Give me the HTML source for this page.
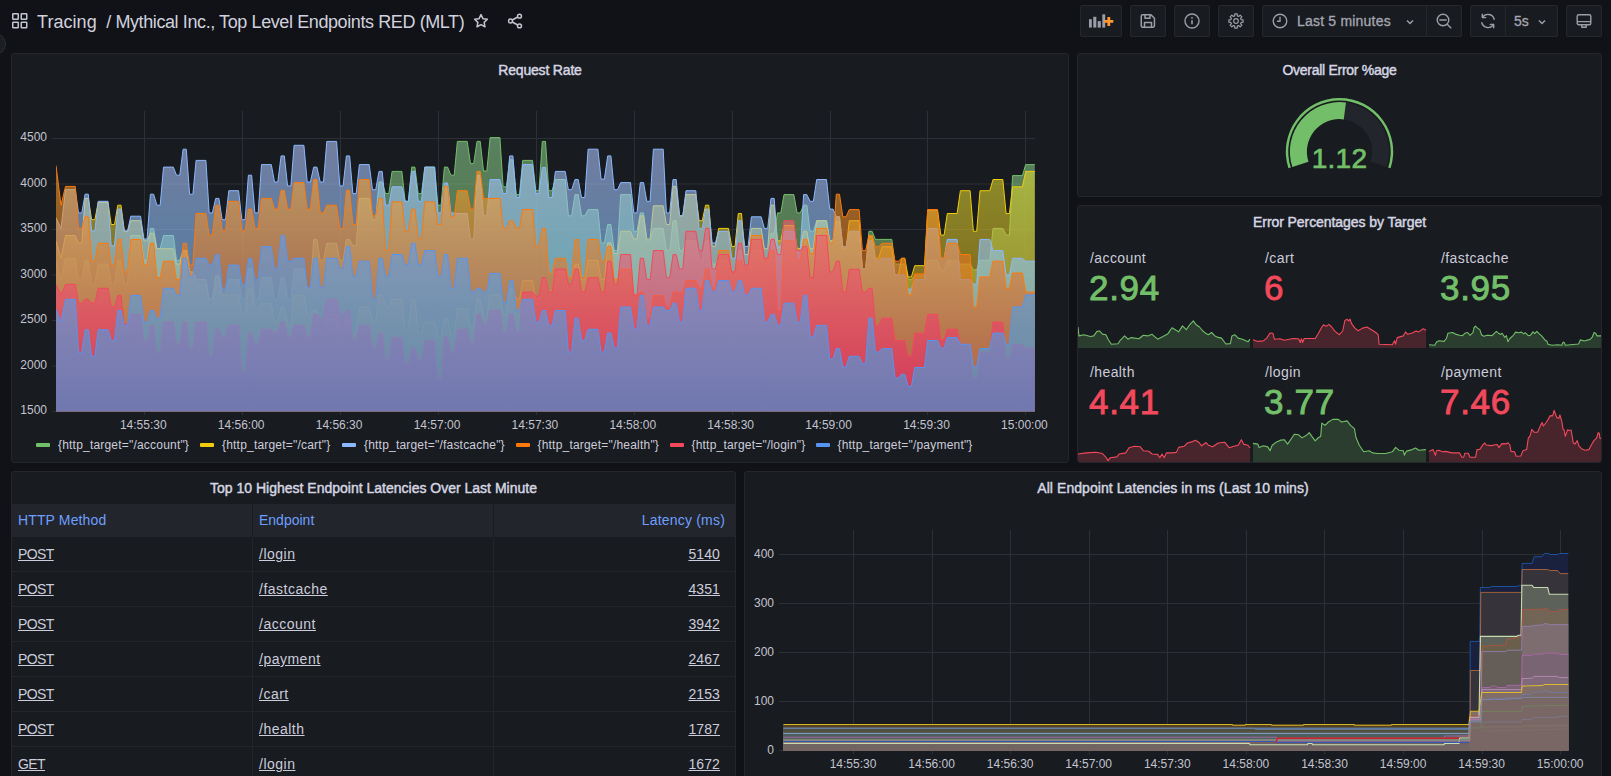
<!DOCTYPE html>
<html lang="en">
<head>
<meta charset="utf-8">
<title>Mythical Inc., Top Level Endpoints RED (MLT)</title>
<style>
*{box-sizing:border-box;margin:0;padding:0}
html,body{width:1611px;height:776px;overflow:hidden;background:#111217;color:#ccccdc;font-family:"Liberation Sans",sans-serif;font-size:14px}
.abs{position:absolute}
.panel{position:absolute;background:#181b1f;border:1px solid #24262b;border-radius:3px;overflow:hidden}
.ptitle{position:absolute;left:0;right:0;top:7px;height:18px;line-height:18px;text-align:center;font-size:14px;color:#d5d6e2;-webkit-text-stroke:0.45px #d5d6e2;letter-spacing:-0.15px}
.tb{position:absolute;top:5px;height:32px;background:#181b1f;border:1px solid #25272d;border-radius:2px}
.tb svg{position:absolute}
.crumb{position:absolute;left:37px;top:10px;height:24px;line-height:24px;font-size:18px;color:#d0d1de;white-space:nowrap;letter-spacing:-0.15px}
svg text{font-family:"Liberation Sans",sans-serif}
.th{position:absolute;top:0;height:33px;line-height:33px;color:#6e9fff;font-size:14px;white-space:nowrap}
.td{position:absolute;height:35px;line-height:34px;font-size:14px;color:#ccccdc;text-decoration:underline;white-space:nowrap}
.row{position:absolute;left:0;width:724px;height:35px;border-bottom:1px solid #23252a}
.stat-l{position:absolute;letter-spacing:0.4px;font-size:14px;color:#ccccdc;white-space:nowrap;line-height:16px}
.stat-v{position:absolute;font-size:35px;white-space:nowrap;line-height:36px;-webkit-text-stroke:0.9px currentColor;letter-spacing:0.7px}
.g{color:#73bf69}.r{color:#f2495c}
.leg{position:absolute;top:437px;height:16px;line-height:16px;font-size:12px;color:#ccccdc;white-space:nowrap;letter-spacing:0.2px}
.sw{position:absolute;top:443px;width:14px;height:4px;border-radius:1px}
</style>
</head>
<body>


<div class="abs" style="left:-16px;top:33px;width:22px;height:22px;border-radius:11px;background:#1b1e23;border:1px solid #2c2f36"></div>
<svg class="abs" style="left:11px;top:12px" width="18" height="18" viewBox="0 0 18 18" fill="none" stroke="#c4c5d2" stroke-width="1.5"><rect x="1.75" y="1.75" width="5.5" height="5.5" rx="0.5"/><rect x="10.25" y="1.75" width="5.5" height="5.5" rx="0.5"/><rect x="1.75" y="10.25" width="5.5" height="5.5" rx="0.5"/><rect x="10.25" y="10.25" width="5.5" height="5.5" rx="0.5"/></svg>
<div class="crumb"><span id="c1" style="letter-spacing:0.05px">Tracing</span><span id="c2" style="margin-left:9.5px;letter-spacing:-0.4px">/ Mythical Inc., Top Level Endpoints RED (MLT)</span></div>
<svg class="abs" style="left:472px;top:12px" width="18" height="18" viewBox="0 0 24 24" fill="none" stroke="#c4c5d2" stroke-width="2" stroke-linejoin="round"><path d="M12 3.5l2.6 5.4 5.9.8-4.3 4.1 1.1 5.9-5.3-2.9-5.3 2.9 1.1-5.9-4.3-4.100 5.900-.8z"/></svg>
<svg class="abs" style="left:506px;top:12px" width="18" height="18" viewBox="0 0 24 24" fill="none" stroke="#c4c5d2" stroke-width="2"><circle cx="18" cy="5.500" r="2.600"/><circle cx="6" cy="12" r="2.600"/><circle cx="18" cy="18.500" r="2.600"/><path d="M8.300 10.700l7.400-4M8.300 13.300l7.400 4"/></svg>

<div class="tb" style="left:1080px;width:42px;"><svg style="left:8px;top:8px" width="26" height="16" viewBox="0 0 26 16"><g fill="#9c9da8"><rect x="-0.100" y="5.200" width="2.900" height="8.400"/><rect x="4.250" y="2.800" width="3.100" height="10.800"/><rect x="8.700" y="7.100" width="3.100" height="6.500"/><rect x="13.300" y="0.300" width="2.900" height="13.300"/></g><path d="M19.800 2.900v9M15.300 7.400h9" stroke="#ff9830" stroke-width="2.800" fill="none"/></svg></div>
<div class="tb" style="left:1130px;width:36px;"><svg style="left:9px;top:7px" width="16" height="16" viewBox="0 0 16 16" fill="none" stroke="#9c9da8" stroke-width="1.500" stroke-linejoin="round"><path d="M2.500 1.750h8.200l3.500 3.500v7.500a1.500 1.500 0 0 1-1.500 1.500h-10.200a1.500 1.500 0 0 1-1.500-1.500v-9.500a1.500 1.500 0 0 1 1.500-1.500z" transform="translate(0.250,0)"/><path d="M5 1.750v3.500h5v-3.500M4.500 14v-4.500h7v4.500"/></svg></div>
<div class="tb" style="left:1174px;width:36px;"><svg style="left:9px;top:7px" width="16" height="16" viewBox="0 0 16 16" fill="none" stroke="#9c9da8" stroke-width="1.400"><circle cx="8" cy="8" r="7"/><path d="M8 7.300v4" stroke-width="1.600"/><circle cx="8" cy="4.900" r="0.900" fill="#9c9da8" stroke="none"/></svg></div>
<div class="tb" style="left:1218px;width:36px;"><svg style="left:9px;top:7px" width="16" height="16" viewBox="-8 -8 16 16" fill="none" stroke="#9c9da8" stroke-width="1.200" stroke-linejoin="round"><path d="M5.12 -1.36L7.10 -1.18L7.10 1.18L5.12 1.36L4.58 2.66L5.86 4.19L4.19 5.86L2.66 4.58L1.36 5.12L1.18 7.10L-1.18 7.10L-1.36 5.12L-2.66 4.58L-4.19 5.86L-5.86 4.19L-4.58 2.66L-5.12 1.36L-7.10 1.18L-7.10 -1.18L-5.12 -1.36L-4.58 -2.66L-5.86 -4.19L-4.19 -5.86L-2.66 -4.58L-1.36 -5.12L-1.18 -7.10L1.18 -7.10L1.36 -5.12L2.66 -4.58L4.19 -5.86L5.86 -4.19L4.58 -2.66Z"/><circle r="2.300"/></svg></div>
<div class="tb" style="left:1262px;width:165px;border-radius:2px 0 0 2px"><svg style="left:9px;top:7px" width="16" height="16" viewBox="0 0 16 16" fill="none" stroke="#9c9da8" stroke-width="1.400"><circle cx="8" cy="8" r="6.800"/><path d="M8 3.800v4.400h-3"/></svg><span id="tp" style="position:absolute;left:34px;top:0;line-height:30px;font-size:14px;color:#a5a6b2;white-space:nowrap;letter-spacing:0.2px;-webkit-text-stroke:0.3px #a5a6b2">Last 5 minutes</span><svg style="left:141px;top:10px" width="12" height="12" viewBox="0 0 12 12" fill="none" stroke="#9c9da8" stroke-width="1.500"><path d="M3 4.500l3 3 3-3"/></svg></div>
<div class="tb" style="left:1426px;width:36px;border-radius:0 2px 2px 0"><svg style="left:9px;top:7px" width="16" height="16" viewBox="0 0 16 16" fill="none" stroke="#9c9da8" stroke-width="1.400"><circle cx="7" cy="7" r="5.800"/><path d="M3.300 7h7.400M11.200 11.200l4 4"/></svg></div>
<div class="tb" style="left:1470px;width:36px;border-radius:2px 0 0 2px"><svg style="left:9px;top:7px" width="16" height="16" viewBox="0 0 16 16" fill="none" stroke="#9c9da8" stroke-width="1.400" stroke-linecap="round" stroke-linejoin="round"><path d="M14.200 6.200a6.400 6.400 0 0 0-11.600-1.800M1.800 9.800a6.400 6.400 0 0 0 11.600 1.800"/><path d="M2.300 1.200v3.400h3.400M13.700 14.800v-3.400h-3.400"/></svg></div>
<div class="tb" style="left:1505px;width:53px;border-radius:0 2px 2px 0"><span style="position:absolute;left:8px;top:0;line-height:30px;font-size:14px;color:#a5a6b2;-webkit-text-stroke:0.3px #a5a6b2">5s</span><svg style="left:30px;top:10px" width="12" height="12" viewBox="0 0 12 12" fill="none" stroke="#9c9da8" stroke-width="1.500"><path d="M3 4.500l3 3 3-3"/></svg></div>
<div class="tb" style="left:1566px;width:36px;"><svg style="left:9px;top:7px" width="16" height="16" viewBox="0 0 16 16" fill="none" stroke="#9c9da8" stroke-width="1.400" stroke-linejoin="round"><rect x="1.200" y="1.700" width="13.600" height="10" rx="1.500"/><path d="M1.200 8.600h13.600M5.300 14.300h5.400M5.800 11.700v2.600M10.200 11.700v2.600"/></svg></div>
<div class="panel" style="left:11px;top:53px;width:1058px;height:410px">
<div class="ptitle" style="letter-spacing:-0.18px"><span>Request Rate</span></div>
<svg class="abs" style="left:0;top:0" width="1056" height="408" viewBox="12 54 1056 408">
<defs>
<linearGradient id="g_acc" gradientUnits="userSpaceOnUse" x1="0" y1="111" x2="0" y2="411.500"><stop offset="0" stop-color="#8dce96" stop-opacity="0.58"/><stop offset="1" stop-color="#6dac49" stop-opacity="0.58"/></linearGradient>
<linearGradient id="g_cart" gradientUnits="userSpaceOnUse" x1="0" y1="111" x2="0" y2="411.500"><stop offset="0" stop-color="#e6f53c" stop-opacity="0.58"/><stop offset="1" stop-color="#c1750a" stop-opacity="0.58"/></linearGradient>
<linearGradient id="g_fc" gradientUnits="userSpaceOnUse" x1="0" y1="111" x2="0" y2="411.500"><stop offset="0" stop-color="#bdc6ff" stop-opacity="0.58"/><stop offset="1" stop-color="#57c3ff" stop-opacity="0.58"/></linearGradient>
<linearGradient id="g_h" gradientUnits="userSpaceOnUse" x1="0" y1="111" x2="0" y2="411.500"><stop offset="0" stop-color="#ffc53d" stop-opacity="0.58"/><stop offset="1" stop-color="#d62b00" stop-opacity="0.58"/></linearGradient>
<linearGradient id="g_log" gradientUnits="userSpaceOnUse" x1="0" y1="111" x2="0" y2="411.500"><stop offset="0" stop-color="#f58a79" stop-opacity="0.58"/><stop offset="1" stop-color="#ef1967" stop-opacity="0.58"/></linearGradient>
<linearGradient id="g_pay" gradientUnits="userSpaceOnUse" x1="0" y1="111" x2="0" y2="411.500"><stop offset="0" stop-color="#8696f6" stop-opacity="0.58"/><stop offset="1" stop-color="#28a8ee" stop-opacity="0.58"/></linearGradient>
<clipPath id="cp1"><rect x="56" y="100" width="978.800" height="311.500"/></clipPath></defs>
<path d="M52 138.5H1035" stroke="#2c2f35" stroke-width="1"/>
<text x="47" y="141.2" text-anchor="end" font-size="12" fill="#c3c4d0">4500</text>
<path d="M52 184.0H1035" stroke="#2c2f35" stroke-width="1"/>
<text x="47" y="186.7" text-anchor="end" font-size="12" fill="#c3c4d0">4000</text>
<path d="M52 229.5H1035" stroke="#2c2f35" stroke-width="1"/>
<text x="47" y="232.2" text-anchor="end" font-size="12" fill="#c3c4d0">3500</text>
<path d="M52 275.0H1035" stroke="#2c2f35" stroke-width="1"/>
<text x="47" y="277.7" text-anchor="end" font-size="12" fill="#c3c4d0">3000</text>
<path d="M52 320.5H1035" stroke="#2c2f35" stroke-width="1"/>
<text x="47" y="323.2" text-anchor="end" font-size="12" fill="#c3c4d0">2500</text>
<path d="M52 366.0H1035" stroke="#2c2f35" stroke-width="1"/>
<text x="47" y="368.7" text-anchor="end" font-size="12" fill="#c3c4d0">2000</text>
<path d="M52 411.5H1035" stroke="#2c2f35" stroke-width="1"/>
<text x="47" y="414.2" text-anchor="end" font-size="12" fill="#c3c4d0">1500</text>
<path d="M144.5 111V415" stroke="#2c2f35" stroke-width="1"/>
<text x="143.3" y="428.500" text-anchor="middle" font-size="12" fill="#c3c4d0">14:55:30</text>
<path d="M242.5 111V415" stroke="#2c2f35" stroke-width="1"/>
<text x="241.2" y="428.500" text-anchor="middle" font-size="12" fill="#c3c4d0">14:56:00</text>
<path d="M340.5 111V415" stroke="#2c2f35" stroke-width="1"/>
<text x="339.1" y="428.500" text-anchor="middle" font-size="12" fill="#c3c4d0">14:56:30</text>
<path d="M438.5 111V415" stroke="#2c2f35" stroke-width="1"/>
<text x="437.0" y="428.500" text-anchor="middle" font-size="12" fill="#c3c4d0">14:57:00</text>
<path d="M536.5 111V415" stroke="#2c2f35" stroke-width="1"/>
<text x="534.9" y="428.500" text-anchor="middle" font-size="12" fill="#c3c4d0">14:57:30</text>
<path d="M634.5 111V415" stroke="#2c2f35" stroke-width="1"/>
<text x="632.8" y="428.500" text-anchor="middle" font-size="12" fill="#c3c4d0">14:58:00</text>
<path d="M732.5 111V415" stroke="#2c2f35" stroke-width="1"/>
<text x="730.7" y="428.500" text-anchor="middle" font-size="12" fill="#c3c4d0">14:58:30</text>
<path d="M830.5 111V415" stroke="#2c2f35" stroke-width="1"/>
<text x="828.6" y="428.500" text-anchor="middle" font-size="12" fill="#c3c4d0">14:59:00</text>
<path d="M927.5 111V415" stroke="#2c2f35" stroke-width="1"/>
<text x="926.5" y="428.500" text-anchor="middle" font-size="12" fill="#c3c4d0">14:59:30</text>
<path d="M1025.5 111V415" stroke="#2c2f35" stroke-width="1"/>
<text x="1024.4" y="428.500" text-anchor="middle" font-size="12" fill="#c3c4d0">15:00:00</text>
<g clip-path="url(#cp1)">
<polygon points="56.0,260.3 61.0,279.6 65.5,258.3 75.3,258.3 78.5,279.6 81.8,279.6 85.1,260.3 88.3,260.3 91.6,283.5 94.9,283.5 98.2,264.1 108.0,264.1 111.2,283.5 114.5,283.5 117.8,260.3 121.0,260.3 124.3,283.5 127.6,283.5 130.8,235.5 140.6,235.5 143.9,260.3 147.1,260.3 150.4,228.4 153.6,228.4 156.9,248.7 160.2,248.7 163.5,235.5 173.3,235.5 176.5,260.3 179.8,260.3 183.1,250.6 186.3,250.6 189.6,271.9 192.9,271.9 196.1,284.4 205.9,284.4 209.2,306.6 212.4,306.6 215.7,277.1 218.9,277.1 222.2,294.1 225.5,294.1 228.8,279.6 238.6,279.6 241.8,298.9 245.1,298.9 248.4,269.0 251.6,269.0 254.9,299.3 258.2,299.3 261.5,277.7 271.3,277.7 274.5,299.3 277.8,299.3 281.1,277.7 284.3,277.7 287.6,298.9 290.9,298.9 294.1,269.0 303.9,269.0 307.2,289.3 310.4,289.3 313.7,239.4 316.9,239.4 320.2,260.3 323.5,260.3 326.8,243.3 336.6,243.3 339.8,260.3 343.1,260.3 346.4,239.4 349.6,239.4 352.9,245.8 356.2,245.8 359.4,198.4 369.2,198.4 372.5,219.7 375.7,219.7 379.0,182.0 382.2,182.0 385.5,193.6 388.8,193.6 392.1,171.4 401.9,171.4 405.1,201.3 408.4,201.3 411.7,167.1 414.9,167.1 418.2,193.6 421.5,193.6 424.8,167.1 434.6,167.1 437.8,205.2 441.1,205.2 444.4,167.1 447.6,167.1 450.9,175.2 454.2,175.2 457.4,141.4 467.2,141.4 470.5,163.6 473.7,163.6 477.0,141.4 480.2,141.4 483.5,171.0 486.8,171.0 490.1,137.6 499.9,137.6 503.1,186.8 506.4,186.8 509.7,159.8 512.9,159.8 516.2,194.6 519.5,194.6 522.7,160.4 532.5,160.4 535.8,190.7 539.0,190.7 542.3,141.4 545.5,141.4 548.8,190.7 552.1,190.7 555.4,179.5 565.2,179.5 568.4,215.8 571.7,215.8 575.0,194.6 578.2,194.6 581.5,215.8 584.8,215.8 588.1,209.6 597.9,209.6 601.1,242.9 604.4,242.9 607.7,224.5 610.9,224.5 614.2,250.6 617.5,250.6 620.7,194.6 630.5,194.6 633.8,231.3 637.0,231.3 640.3,212.9 643.5,212.9 646.8,240.9 650.1,240.9 653.4,228.4 663.2,228.4 666.4,250.6 669.7,250.6 673.0,220.7 676.2,220.7 679.5,250.6 682.8,250.6 686.0,240.9 695.8,240.9 699.1,260.3 702.3,260.3 705.6,240.9 708.8,240.9 712.1,264.1 715.4,264.1 718.7,260.3 728.5,260.3 731.7,275.7 735.0,275.7 738.3,250.6 741.5,250.6 744.8,271.9 748.1,271.9 751.4,250.6 761.2,250.6 764.4,264.1 767.7,264.1 771.0,233.2 774.2,233.2 777.5,212.9 780.8,212.9 784.0,194.6 793.8,194.6 797.1,212.9 800.3,212.9 803.6,205.2 806.8,205.2 810.1,231.3 813.4,231.3 816.7,220.7 826.5,220.7 829.7,240.9 833.0,240.9 836.3,216.8 839.5,216.8 842.8,246.7 846.1,246.7 849.3,231.3 859.1,231.3 862.4,269.0 865.6,269.0 868.9,231.3 872.1,231.3 875.4,239.4 878.7,239.4 882.0,239.4 891.8,239.4 895.0,264.1 898.3,264.1 901.6,264.1 904.8,264.1 908.1,279.6 911.4,279.6 914.7,275.7 924.5,275.7 927.7,260.3 937.5,260.3 940.8,269.9 944.1,269.9 947.3,260.3 957.1,260.3 960.4,264.1 970.1,264.1 973.4,269.9 976.7,269.9 980.0,260.3 989.8,260.3 993.0,228.4 1002.8,228.4 1006.1,235.1 1009.4,235.1 1012.6,175.6 1022.4,175.6 1025.7,164.6 1035.0,164.6 1035.500,412 56,412" fill="url(#g_acc)"/>
<polyline points="56.0,260.3 61.0,279.6 65.5,258.3 75.3,258.3 78.5,279.6 81.8,279.6 85.1,260.3 88.3,260.3 91.6,283.5 94.9,283.5 98.2,264.1 108.0,264.1 111.2,283.5 114.5,283.5 117.8,260.3 121.0,260.3 124.3,283.5 127.6,283.5 130.8,235.5 140.6,235.5 143.9,260.3 147.1,260.3 150.4,228.4 153.6,228.4 156.9,248.7 160.2,248.7 163.5,235.5 173.3,235.5 176.5,260.3 179.8,260.3 183.1,250.6 186.3,250.6 189.6,271.9 192.9,271.9 196.1,284.4 205.9,284.4 209.2,306.6 212.4,306.6 215.7,277.1 218.9,277.1 222.2,294.1 225.5,294.1 228.8,279.6 238.6,279.6 241.8,298.9 245.1,298.9 248.4,269.0 251.6,269.0 254.9,299.3 258.2,299.3 261.5,277.7 271.3,277.7 274.5,299.3 277.8,299.3 281.1,277.7 284.3,277.7 287.6,298.9 290.9,298.9 294.1,269.0 303.9,269.0 307.2,289.3 310.4,289.3 313.7,239.4 316.9,239.4 320.2,260.3 323.5,260.3 326.8,243.3 336.6,243.3 339.8,260.3 343.1,260.3 346.4,239.4 349.6,239.4 352.9,245.8 356.2,245.8 359.4,198.4 369.2,198.4 372.5,219.7 375.7,219.7 379.0,182.0 382.2,182.0 385.5,193.6 388.8,193.6 392.1,171.4 401.9,171.4 405.1,201.3 408.4,201.3 411.7,167.1 414.9,167.1 418.2,193.6 421.5,193.6 424.8,167.1 434.6,167.1 437.8,205.2 441.1,205.2 444.4,167.1 447.6,167.1 450.9,175.2 454.2,175.2 457.4,141.4 467.2,141.4 470.5,163.6 473.7,163.6 477.0,141.4 480.2,141.4 483.5,171.0 486.8,171.0 490.1,137.6 499.9,137.6 503.1,186.8 506.4,186.8 509.7,159.8 512.9,159.8 516.2,194.6 519.5,194.6 522.7,160.4 532.5,160.4 535.8,190.7 539.0,190.7 542.3,141.4 545.5,141.4 548.8,190.7 552.1,190.7 555.4,179.5 565.2,179.5 568.4,215.8 571.7,215.8 575.0,194.6 578.2,194.6 581.5,215.8 584.8,215.8 588.1,209.6 597.9,209.6 601.1,242.9 604.4,242.9 607.7,224.5 610.9,224.5 614.2,250.6 617.5,250.6 620.7,194.6 630.5,194.6 633.8,231.3 637.0,231.3 640.3,212.9 643.5,212.9 646.8,240.9 650.1,240.9 653.4,228.4 663.2,228.4 666.4,250.6 669.7,250.6 673.0,220.7 676.2,220.7 679.5,250.6 682.8,250.6 686.0,240.9 695.8,240.9 699.1,260.3 702.3,260.3 705.6,240.9 708.8,240.9 712.1,264.1 715.4,264.1 718.7,260.3 728.5,260.3 731.7,275.7 735.0,275.7 738.3,250.6 741.5,250.6 744.8,271.9 748.1,271.9 751.4,250.6 761.2,250.6 764.4,264.1 767.7,264.1 771.0,233.2 774.2,233.2 777.5,212.9 780.8,212.9 784.0,194.6 793.8,194.6 797.1,212.9 800.3,212.9 803.6,205.2 806.8,205.2 810.1,231.3 813.4,231.3 816.7,220.7 826.5,220.7 829.7,240.9 833.0,240.9 836.3,216.8 839.5,216.8 842.8,246.7 846.1,246.7 849.3,231.3 859.1,231.3 862.4,269.0 865.6,269.0 868.9,231.3 872.1,231.3 875.4,239.4 878.7,239.4 882.0,239.4 891.8,239.4 895.0,264.1 898.3,264.1 901.6,264.1 904.8,264.1 908.1,279.6 911.4,279.6 914.7,275.7 924.5,275.7 927.7,260.3 937.5,260.3 940.8,269.9 944.1,269.9 947.3,260.3 957.1,260.3 960.4,264.1 970.1,264.1 973.4,269.9 976.7,269.9 980.0,260.3 989.8,260.3 993.0,228.4 1002.8,228.4 1006.1,235.1 1009.4,235.1 1012.6,175.6 1022.4,175.6 1025.7,164.6 1035.0,164.6" fill="none" stroke="#73bf69" stroke-width="1" stroke-linejoin="round"/>
<polygon points="56.0,240.9 61.0,258.3 65.5,235.5 75.3,235.5 78.5,242.9 81.8,242.9 85.1,198.4 88.3,198.4 91.6,219.7 94.9,219.7 98.2,202.3 108.0,202.3 111.2,224.5 114.5,224.5 117.8,205.2 121.0,205.2 124.3,231.3 127.6,231.3 130.8,220.7 140.6,220.7 143.9,240.9 147.1,240.9 150.4,233.2 153.6,233.2 156.9,248.7 160.2,248.7 163.5,248.7 173.3,248.7 176.5,264.1 179.8,264.1 183.1,250.6 186.3,250.6 189.6,271.9 192.9,271.9 196.1,279.6 205.9,279.6 209.2,298.9 212.4,298.9 215.7,275.7 218.9,275.7 222.2,295.0 225.5,295.0 228.8,295.0 238.6,295.0 241.8,314.4 245.1,314.4 248.4,289.3 251.6,289.3 254.9,308.6 258.2,308.6 261.5,303.7 271.3,303.7 274.5,322.1 277.8,322.1 281.1,307.0 284.3,307.0 287.6,325.4 290.9,325.4 294.1,295.4 303.9,295.4 307.2,314.4 310.4,314.4 313.7,310.5 316.9,310.5 320.2,332.7 323.5,332.7 326.8,314.4 336.6,314.4 339.8,328.9 343.1,328.9 346.4,318.2 349.6,318.2 352.9,333.1 356.2,333.1 359.4,307.0 369.2,307.0 372.5,322.1 375.7,322.1 379.0,295.4 382.2,295.4 385.5,307.0 388.8,307.0 392.1,299.3 401.9,299.3 405.1,329.3 408.4,329.3 411.7,299.3 414.9,299.3 418.2,333.1 421.5,333.1 424.8,322.1 434.6,322.1 437.8,337.0 441.1,337.0 444.4,318.2 447.6,318.2 450.9,333.7 454.2,333.7 457.4,308.6 467.2,308.6 470.5,327.9 473.7,327.9 477.0,298.9 480.2,298.9 483.5,318.2 486.8,318.2 490.1,295.0 499.9,295.0 503.1,314.4 506.4,314.4 509.7,289.3 512.9,289.3 516.2,298.9 519.5,298.9 522.7,280.6 532.5,280.6 535.8,298.9 539.0,298.9 542.3,279.6 545.5,279.6 548.8,291.2 552.1,291.2 555.4,271.9 565.2,271.9 568.4,289.3 571.7,289.3 575.0,264.1 578.2,264.1 581.5,279.6 584.8,279.6 588.1,260.3 597.9,260.3 601.1,279.6 604.4,279.6 607.7,242.9 610.9,242.9 614.2,253.5 617.5,253.5 620.7,231.3 630.5,231.3 633.8,239.0 637.0,239.0 640.3,215.8 643.5,215.8 646.8,239.0 650.1,239.0 653.4,205.8 663.2,205.8 666.4,224.5 669.7,224.5 673.0,186.4 676.2,186.4 679.5,215.8 682.8,215.8 686.0,194.6 695.8,194.6 699.1,220.7 702.3,220.7 705.6,205.2 708.8,205.2 712.1,246.4 715.4,246.4 718.7,228.4 728.5,228.4 731.7,246.4 735.0,246.4 738.3,213.5 741.5,213.5 744.8,254.5 748.1,254.5 751.4,228.4 761.2,228.4 764.4,248.7 767.7,248.7 771.0,205.2 774.2,205.2 777.5,240.9 780.8,240.9 784.0,225.5 793.8,225.5 797.1,248.7 800.3,248.7 803.6,231.3 806.8,231.3 810.1,248.7 813.4,248.7 816.7,220.7 826.5,220.7 829.7,240.9 833.0,240.9 836.3,221.6 839.5,221.6 842.8,248.7 846.1,248.7 849.3,220.7 859.1,220.7 862.4,269.0 865.6,269.0 868.9,235.5 872.1,235.5 875.4,258.3 878.7,258.3 882.0,246.7 891.8,246.7 895.0,275.0 898.3,275.0 901.6,258.3 904.8,258.3 908.1,276.9 911.4,276.9 914.7,265.7 924.5,265.7 927.7,210.0 937.5,210.0 940.8,235.1 944.1,235.1 947.3,213.5 957.1,213.5 960.4,190.7 970.1,190.7 973.4,231.3 976.7,231.3 980.0,190.7 989.8,190.7 993.0,179.5 1002.8,179.5 1006.1,213.5 1009.4,213.5 1012.6,186.8 1022.4,186.8 1025.7,171.4 1035.0,171.4 1035.500,412 56,412" fill="url(#g_cart)"/>
<polyline points="56.0,240.9 61.0,258.3 65.5,235.5 75.3,235.5 78.5,242.9 81.8,242.9 85.1,198.4 88.3,198.4 91.6,219.7 94.9,219.7 98.2,202.3 108.0,202.3 111.2,224.5 114.5,224.5 117.8,205.2 121.0,205.2 124.3,231.3 127.6,231.3 130.8,220.7 140.6,220.7 143.9,240.9 147.1,240.9 150.4,233.2 153.6,233.2 156.9,248.7 160.2,248.7 163.5,248.7 173.3,248.7 176.5,264.1 179.8,264.1 183.1,250.6 186.3,250.6 189.6,271.9 192.9,271.9 196.1,279.6 205.9,279.6 209.2,298.9 212.4,298.9 215.7,275.7 218.9,275.7 222.2,295.0 225.5,295.0 228.8,295.0 238.6,295.0 241.8,314.4 245.1,314.4 248.4,289.3 251.6,289.3 254.9,308.6 258.2,308.6 261.5,303.7 271.3,303.7 274.5,322.1 277.8,322.1 281.1,307.0 284.3,307.0 287.6,325.4 290.9,325.4 294.1,295.4 303.9,295.4 307.2,314.4 310.4,314.4 313.7,310.5 316.9,310.5 320.2,332.7 323.5,332.7 326.8,314.4 336.6,314.4 339.8,328.9 343.1,328.9 346.4,318.2 349.6,318.2 352.9,333.1 356.2,333.1 359.4,307.0 369.2,307.0 372.5,322.1 375.7,322.1 379.0,295.4 382.2,295.4 385.5,307.0 388.8,307.0 392.1,299.3 401.9,299.3 405.1,329.3 408.4,329.3 411.7,299.3 414.9,299.3 418.2,333.1 421.5,333.1 424.8,322.1 434.6,322.1 437.8,337.0 441.1,337.0 444.4,318.2 447.6,318.2 450.9,333.7 454.2,333.7 457.4,308.6 467.2,308.6 470.5,327.9 473.7,327.9 477.0,298.9 480.2,298.9 483.5,318.2 486.8,318.2 490.1,295.0 499.9,295.0 503.1,314.4 506.4,314.4 509.7,289.3 512.9,289.3 516.2,298.9 519.5,298.9 522.7,280.6 532.5,280.6 535.8,298.9 539.0,298.9 542.3,279.6 545.5,279.6 548.8,291.2 552.1,291.2 555.4,271.9 565.2,271.9 568.4,289.3 571.7,289.3 575.0,264.1 578.2,264.1 581.5,279.6 584.8,279.6 588.1,260.3 597.9,260.3 601.1,279.6 604.4,279.6 607.7,242.9 610.9,242.9 614.2,253.5 617.5,253.5 620.7,231.3 630.5,231.3 633.8,239.0 637.0,239.0 640.3,215.8 643.5,215.8 646.8,239.0 650.1,239.0 653.4,205.8 663.2,205.8 666.4,224.5 669.7,224.5 673.0,186.4 676.2,186.4 679.5,215.8 682.8,215.8 686.0,194.6 695.8,194.6 699.1,220.7 702.3,220.7 705.6,205.2 708.8,205.2 712.1,246.4 715.4,246.4 718.7,228.4 728.5,228.4 731.7,246.4 735.0,246.4 738.3,213.5 741.5,213.5 744.8,254.5 748.1,254.5 751.4,228.4 761.2,228.4 764.4,248.7 767.7,248.7 771.0,205.2 774.2,205.2 777.5,240.9 780.8,240.9 784.0,225.5 793.8,225.5 797.1,248.7 800.3,248.7 803.6,231.3 806.8,231.3 810.1,248.7 813.4,248.7 816.7,220.7 826.5,220.7 829.7,240.9 833.0,240.9 836.3,221.6 839.5,221.6 842.8,248.7 846.1,248.7 849.3,220.7 859.1,220.7 862.4,269.0 865.6,269.0 868.9,235.5 872.1,235.5 875.4,258.3 878.7,258.3 882.0,246.7 891.8,246.7 895.0,275.0 898.3,275.0 901.6,258.3 904.8,258.3 908.1,276.9 911.4,276.9 914.7,265.7 924.5,265.7 927.7,210.0 937.5,210.0 940.8,235.1 944.1,235.1 947.3,213.5 957.1,213.5 960.4,190.7 970.1,190.7 973.4,231.3 976.7,231.3 980.0,190.7 989.8,190.7 993.0,179.5 1002.8,179.5 1006.1,213.5 1009.4,213.5 1012.6,186.8 1022.4,186.8 1025.7,171.4 1035.0,171.4" fill="none" stroke="#f2cc0c" stroke-width="1" stroke-linejoin="round"/>
<polygon points="56.0,217.8 61.0,228.4 65.5,189.7 75.3,189.7 78.5,212.9 81.8,212.9 85.1,194.2 88.3,194.2 91.6,230.9 94.9,230.9 98.2,201.3 108.0,201.3 111.2,245.8 114.5,245.8 117.8,209.1 121.0,209.1 124.3,230.9 127.6,230.9 130.8,216.2 140.6,216.2 143.9,239.0 147.1,239.0 150.4,194.2 153.6,194.2 156.9,205.2 160.2,205.2 163.5,167.1 173.3,167.1 176.5,175.2 179.8,175.2 183.1,149.2 186.3,149.2 189.6,194.2 192.9,194.2 196.1,160.4 205.9,160.4 209.2,212.9 212.4,212.9 215.7,198.4 218.9,198.4 222.2,219.7 225.5,219.7 228.8,190.7 238.6,190.7 241.8,219.7 245.1,219.7 248.4,175.2 251.6,175.2 254.9,212.9 258.2,212.9 261.5,164.6 271.3,164.6 274.5,182.0 277.8,182.0 281.1,155.9 284.3,155.9 287.6,185.9 290.9,185.9 294.1,145.3 303.9,145.3 307.2,182.0 310.4,182.0 313.7,167.1 316.9,167.1 320.2,182.0 323.5,182.0 326.8,141.4 336.6,141.4 339.8,185.9 343.1,185.9 346.4,155.9 349.6,155.9 352.9,193.6 356.2,193.6 359.4,164.6 369.2,164.6 372.5,189.7 375.7,189.7 379.0,171.4 382.2,171.4 385.5,205.2 388.8,205.2 392.1,186.8 401.9,186.8 405.1,201.3 408.4,201.3 411.7,171.4 414.9,171.4 418.2,201.3 421.5,201.3 424.8,167.1 434.6,167.1 437.8,212.9 441.1,212.9 444.4,183.0 447.6,183.0 450.9,212.9 454.2,212.9 457.4,213.5 467.2,213.5 470.5,239.0 473.7,239.0 477.0,175.6 480.2,175.6 483.5,215.8 486.8,215.8 490.1,179.5 499.9,179.5 503.1,193.6 506.4,193.6 509.7,155.9 512.9,155.9 516.2,197.5 519.5,197.5 522.7,164.6 532.5,164.6 535.8,193.6 539.0,193.6 542.3,167.5 545.5,167.5 548.8,197.5 552.1,197.5 555.4,171.4 565.2,171.4 568.4,189.7 571.7,189.7 575.0,179.5 578.2,179.5 581.5,197.5 584.8,197.5 588.1,149.2 597.9,149.2 601.1,179.1 604.4,179.1 607.7,155.9 610.9,155.9 614.2,189.7 617.5,189.7 620.7,182.6 630.5,182.6 633.8,212.9 637.0,212.9 640.3,182.6 643.5,182.6 646.8,201.3 650.1,201.3 653.4,149.2 663.2,149.2 666.4,212.9 669.7,212.9 673.0,179.5 676.2,179.5 679.5,215.8 682.8,215.8 686.0,190.7 695.8,190.7 699.1,228.4 702.3,228.4 705.6,209.1 708.8,209.1 712.1,242.9 715.4,242.9 718.7,231.3 728.5,231.3 731.7,258.3 735.0,258.3 738.3,220.7 741.5,220.7 744.8,246.4 748.1,246.4 751.4,216.8 761.2,216.8 764.4,228.4 767.7,228.4 771.0,198.4 774.2,198.4 777.5,246.4 780.8,246.4 784.0,231.3 793.8,231.3 797.1,250.6 800.3,250.6 803.6,194.6 806.8,194.6 810.1,201.3 813.4,201.3 816.7,179.5 826.5,179.5 829.7,209.1 833.0,209.1 836.3,216.8 839.5,216.8 842.8,246.7 846.1,246.7 849.3,231.3 859.1,231.3 862.4,269.0 865.6,269.0 868.9,240.9 872.1,240.9 875.4,260.3 878.7,260.3 882.0,258.3 891.8,258.3 895.0,275.0 898.3,275.0 901.6,275.0 904.8,275.0 908.1,289.3 911.4,289.3 914.7,279.6 924.5,279.6 927.7,228.4 937.5,228.4 940.8,258.3 944.1,258.3 947.3,239.4 957.1,239.4 960.4,279.6 970.1,279.6 973.4,284.2 976.7,284.2 980.0,239.4 989.8,239.4 993.0,250.6 1002.8,250.6 1006.1,275.0 1009.4,275.0 1012.6,258.3 1022.4,258.3 1025.7,261.2 1035.0,261.2 1035.500,412 56,412" fill="url(#g_fc)"/>
<polyline points="56.0,217.8 61.0,228.4 65.5,189.7 75.3,189.7 78.5,212.9 81.8,212.9 85.1,194.2 88.3,194.2 91.6,230.9 94.9,230.9 98.2,201.3 108.0,201.3 111.2,245.8 114.5,245.8 117.8,209.1 121.0,209.1 124.3,230.9 127.6,230.9 130.8,216.2 140.6,216.2 143.9,239.0 147.1,239.0 150.4,194.2 153.6,194.2 156.9,205.2 160.2,205.2 163.5,167.1 173.3,167.1 176.5,175.2 179.8,175.2 183.1,149.2 186.3,149.2 189.6,194.2 192.9,194.2 196.1,160.4 205.9,160.4 209.2,212.9 212.4,212.9 215.7,198.4 218.9,198.4 222.2,219.7 225.5,219.7 228.8,190.7 238.6,190.7 241.8,219.7 245.1,219.7 248.4,175.2 251.6,175.2 254.9,212.9 258.2,212.9 261.5,164.6 271.3,164.6 274.5,182.0 277.8,182.0 281.1,155.9 284.3,155.9 287.6,185.9 290.9,185.9 294.1,145.3 303.9,145.3 307.2,182.0 310.4,182.0 313.7,167.1 316.9,167.1 320.2,182.0 323.5,182.0 326.8,141.4 336.6,141.4 339.8,185.9 343.1,185.9 346.4,155.9 349.6,155.9 352.9,193.6 356.2,193.6 359.4,164.6 369.2,164.6 372.5,189.7 375.7,189.7 379.0,171.4 382.2,171.4 385.5,205.2 388.8,205.2 392.1,186.8 401.9,186.8 405.1,201.3 408.4,201.3 411.7,171.4 414.9,171.4 418.2,201.3 421.5,201.3 424.8,167.1 434.6,167.1 437.8,212.9 441.1,212.9 444.4,183.0 447.6,183.0 450.9,212.9 454.2,212.9 457.4,213.5 467.2,213.5 470.5,239.0 473.7,239.0 477.0,175.6 480.2,175.6 483.5,215.8 486.8,215.8 490.1,179.5 499.9,179.5 503.1,193.6 506.4,193.6 509.7,155.9 512.9,155.9 516.2,197.5 519.5,197.5 522.7,164.6 532.5,164.6 535.8,193.6 539.0,193.6 542.3,167.5 545.5,167.5 548.8,197.5 552.1,197.5 555.4,171.4 565.2,171.4 568.4,189.7 571.7,189.7 575.0,179.5 578.2,179.5 581.5,197.5 584.8,197.5 588.1,149.2 597.9,149.2 601.1,179.1 604.4,179.1 607.7,155.9 610.9,155.9 614.2,189.7 617.5,189.7 620.7,182.6 630.5,182.6 633.8,212.9 637.0,212.9 640.3,182.6 643.5,182.6 646.8,201.3 650.1,201.3 653.4,149.2 663.2,149.2 666.4,212.9 669.7,212.9 673.0,179.5 676.2,179.5 679.5,215.8 682.8,215.8 686.0,190.7 695.8,190.7 699.1,228.4 702.3,228.4 705.6,209.1 708.8,209.1 712.1,242.9 715.4,242.9 718.7,231.3 728.5,231.3 731.7,258.3 735.0,258.3 738.3,220.7 741.5,220.7 744.8,246.4 748.1,246.4 751.4,216.8 761.2,216.8 764.4,228.4 767.7,228.4 771.0,198.4 774.2,198.4 777.5,246.4 780.8,246.4 784.0,231.3 793.8,231.3 797.1,250.6 800.3,250.6 803.6,194.6 806.8,194.6 810.1,201.3 813.4,201.3 816.7,179.5 826.5,179.5 829.7,209.1 833.0,209.1 836.3,216.8 839.5,216.8 842.8,246.7 846.1,246.7 849.3,231.3 859.1,231.3 862.4,269.0 865.6,269.0 868.9,240.9 872.1,240.9 875.4,260.3 878.7,260.3 882.0,258.3 891.8,258.3 895.0,275.0 898.3,275.0 901.6,275.0 904.8,275.0 908.1,289.3 911.4,289.3 914.7,279.6 924.5,279.6 927.7,228.4 937.5,228.4 940.8,258.3 944.1,258.3 947.3,239.4 957.1,239.4 960.4,279.6 970.1,279.6 973.4,284.2 976.7,284.2 980.0,239.4 989.8,239.4 993.0,250.6 1002.8,250.6 1006.1,275.0 1009.4,275.0 1012.6,258.3 1022.4,258.3 1025.7,261.2 1035.0,261.2" fill="none" stroke="#8ab8ff" stroke-width="1" stroke-linejoin="round"/>
<polygon points="56.0,165.6 61.0,205.2 65.5,186.4 75.3,186.4 78.5,228.4 81.8,228.4 85.1,216.8 88.3,216.8 91.6,261.2 94.9,261.2 98.2,243.3 108.0,243.3 111.2,265.1 114.5,265.1 117.8,239.4 121.0,239.4 124.3,271.9 127.6,271.9 130.8,239.4 140.6,239.4 143.9,265.1 147.1,265.1 150.4,243.3 153.6,243.3 156.9,277.7 160.2,277.7 163.5,261.2 173.3,261.2 176.5,279.6 179.8,279.6 183.1,243.3 186.3,243.3 189.6,265.1 192.9,265.1 196.1,213.5 205.9,213.5 209.2,235.1 212.4,235.1 215.7,205.2 218.9,205.2 222.2,230.9 225.5,230.9 228.8,201.3 238.6,201.3 241.8,230.9 245.1,230.9 248.4,209.1 251.6,209.1 254.9,228.4 258.2,228.4 261.5,198.4 271.3,198.4 274.5,209.1 277.8,209.1 281.1,190.3 284.3,190.3 287.6,209.1 290.9,209.1 294.1,182.6 303.9,182.6 307.2,209.1 310.4,209.1 313.7,179.5 316.9,179.5 320.2,212.9 323.5,212.9 326.8,205.2 336.6,205.2 339.8,228.4 343.1,228.4 346.4,190.3 349.6,190.3 352.9,224.5 356.2,224.5 359.4,179.5 369.2,179.5 372.5,215.8 375.7,215.8 379.0,198.4 382.2,198.4 385.5,250.2 388.8,250.2 392.1,201.9 401.9,201.9 405.1,231.3 408.4,231.3 411.7,209.1 414.9,209.1 418.2,239.0 421.5,239.0 424.8,201.9 434.6,201.9 437.8,224.5 441.1,224.5 444.4,186.4 447.6,186.4 450.9,216.8 454.2,216.8 457.4,190.7 467.2,190.7 470.5,209.1 473.7,209.1 477.0,171.4 480.2,171.4 483.5,198.4 486.8,198.4 490.1,198.4 499.9,198.4 503.1,228.4 506.4,228.4 509.7,220.7 512.9,220.7 516.2,228.4 519.5,228.4 522.7,209.6 532.5,209.6 535.8,246.4 539.0,246.4 542.3,228.4 545.5,228.4 548.8,273.8 552.1,273.8 555.4,258.3 565.2,258.3 568.4,277.7 571.7,277.7 575.0,239.4 578.2,239.4 581.5,277.7 584.8,277.7 588.1,239.4 597.9,239.4 601.1,261.2 604.4,261.2 607.7,246.4 610.9,246.4 614.2,279.6 617.5,279.6 620.7,269.2 630.5,269.2 633.8,295.0 637.0,295.0 640.3,292.1 643.5,292.1 646.8,318.2 650.1,318.2 653.4,295.6 663.2,295.6 666.4,307.2 669.7,307.2 673.0,292.1 676.2,292.1 679.5,292.1 682.8,292.1 686.0,280.6 695.8,280.6 699.1,287.9 702.3,287.9 705.6,269.0 708.8,269.0 712.1,287.9 715.4,287.9 718.7,250.6 728.5,250.6 731.7,271.9 735.0,271.9 738.3,260.3 741.5,260.3 744.8,268.0 748.1,268.0 751.4,235.5 761.2,235.5 764.4,260.3 767.7,260.3 771.0,250.6 774.2,250.6 777.5,310.5 780.8,310.5 784.0,240.9 793.8,240.9 797.1,260.3 800.3,260.3 803.6,239.4 806.8,239.4 810.1,253.5 813.4,253.5 816.7,228.4 826.5,228.4 829.7,242.9 833.0,242.9 836.3,194.2 839.5,194.2 842.8,216.8 846.1,216.8 849.3,209.6 859.1,209.6 862.4,250.6 865.6,250.6 868.9,235.5 872.1,235.5 875.4,246.7 878.7,246.7 882.0,243.3 891.8,243.3 895.0,261.2 898.3,261.2 901.6,258.3 904.8,258.3 908.1,295.0 911.4,295.0 914.7,273.8 924.5,273.8 927.7,209.6 937.5,209.6 940.8,258.3 944.1,258.3 947.3,243.3 957.1,243.3 960.4,254.5 970.1,254.5 973.4,307.0 976.7,307.0 980.0,276.9 989.8,276.9 993.0,261.2 1002.8,261.2 1006.1,288.3 1009.4,288.3 1012.6,273.0 1022.4,273.0 1025.7,292.1 1035.0,292.1 1035.500,412 56,412" fill="url(#g_h)"/>
<polyline points="56.0,165.6 61.0,205.2 65.5,186.4 75.3,186.4 78.5,228.4 81.8,228.4 85.1,216.8 88.3,216.8 91.6,261.2 94.9,261.2 98.2,243.3 108.0,243.3 111.2,265.1 114.5,265.1 117.8,239.4 121.0,239.4 124.3,271.9 127.6,271.9 130.8,239.4 140.6,239.4 143.9,265.1 147.1,265.1 150.4,243.3 153.6,243.3 156.9,277.7 160.2,277.7 163.5,261.2 173.3,261.2 176.5,279.6 179.8,279.6 183.1,243.3 186.3,243.3 189.6,265.1 192.9,265.1 196.1,213.5 205.9,213.5 209.2,235.1 212.4,235.1 215.7,205.2 218.9,205.2 222.2,230.9 225.5,230.9 228.8,201.3 238.6,201.3 241.8,230.9 245.1,230.9 248.4,209.1 251.6,209.1 254.9,228.4 258.2,228.4 261.5,198.4 271.3,198.4 274.5,209.1 277.8,209.1 281.1,190.3 284.3,190.3 287.6,209.1 290.9,209.1 294.1,182.6 303.9,182.6 307.2,209.1 310.4,209.1 313.7,179.5 316.9,179.5 320.2,212.9 323.5,212.9 326.8,205.2 336.6,205.2 339.8,228.4 343.1,228.4 346.4,190.3 349.6,190.3 352.9,224.5 356.2,224.5 359.4,179.5 369.2,179.5 372.5,215.8 375.7,215.8 379.0,198.4 382.2,198.4 385.5,250.2 388.8,250.2 392.1,201.9 401.9,201.9 405.1,231.3 408.4,231.3 411.7,209.1 414.9,209.1 418.2,239.0 421.5,239.0 424.8,201.9 434.6,201.9 437.8,224.5 441.1,224.5 444.4,186.4 447.6,186.4 450.9,216.8 454.2,216.8 457.4,190.7 467.2,190.7 470.5,209.1 473.7,209.1 477.0,171.4 480.2,171.4 483.5,198.4 486.8,198.4 490.1,198.4 499.9,198.4 503.1,228.4 506.4,228.4 509.7,220.7 512.9,220.7 516.2,228.4 519.5,228.4 522.7,209.6 532.5,209.6 535.8,246.4 539.0,246.4 542.3,228.4 545.5,228.4 548.8,273.8 552.1,273.8 555.4,258.3 565.2,258.3 568.4,277.7 571.7,277.7 575.0,239.4 578.2,239.4 581.5,277.7 584.8,277.7 588.1,239.4 597.9,239.4 601.1,261.2 604.4,261.2 607.7,246.4 610.9,246.4 614.2,279.6 617.5,279.6 620.7,269.2 630.5,269.2 633.8,295.0 637.0,295.0 640.3,292.1 643.5,292.1 646.8,318.2 650.1,318.2 653.4,295.6 663.2,295.6 666.4,307.2 669.7,307.2 673.0,292.1 676.2,292.1 679.5,292.1 682.8,292.1 686.0,280.6 695.8,280.6 699.1,287.9 702.3,287.9 705.6,269.0 708.8,269.0 712.1,287.9 715.4,287.9 718.7,250.6 728.5,250.6 731.7,271.9 735.0,271.9 738.3,260.3 741.5,260.3 744.8,268.0 748.1,268.0 751.4,235.5 761.2,235.5 764.4,260.3 767.7,260.3 771.0,250.6 774.2,250.6 777.5,310.5 780.8,310.5 784.0,240.9 793.8,240.9 797.1,260.3 800.3,260.3 803.6,239.4 806.8,239.4 810.1,253.5 813.4,253.5 816.7,228.4 826.5,228.4 829.7,242.9 833.0,242.9 836.3,194.2 839.5,194.2 842.8,216.8 846.1,216.8 849.3,209.6 859.1,209.6 862.4,250.6 865.6,250.6 868.9,235.5 872.1,235.5 875.4,246.7 878.7,246.7 882.0,243.3 891.8,243.3 895.0,261.2 898.3,261.2 901.6,258.3 904.8,258.3 908.1,295.0 911.4,295.0 914.7,273.8 924.5,273.8 927.7,209.6 937.5,209.6 940.8,258.3 944.1,258.3 947.3,243.3 957.1,243.3 960.4,254.5 970.1,254.5 973.4,307.0 976.7,307.0 980.0,276.9 989.8,276.9 993.0,261.2 1002.8,261.2 1006.1,288.3 1009.4,288.3 1012.6,273.0 1022.4,273.0 1025.7,292.1 1035.0,292.1" fill="none" stroke="#ff780a" stroke-width="1" stroke-linejoin="round"/>
<polygon points="56.0,284.4 61.0,295.0 65.5,284.4 75.3,284.4 78.5,303.2 81.8,303.2 85.1,299.3 88.3,299.3 91.6,303.2 94.9,303.2 98.2,288.3 108.0,288.3 111.2,306.6 114.5,306.6 117.8,295.4 121.0,295.4 124.3,324.0 127.6,324.0 130.8,314.4 140.6,314.4 143.9,340.5 147.1,340.5 150.4,325.4 153.6,325.4 156.9,352.1 160.2,352.1 163.5,322.1 173.3,322.1 176.5,344.3 179.8,344.3 183.1,322.1 186.3,322.1 189.6,348.2 192.9,348.2 196.1,322.1 205.9,322.1 209.2,355.9 212.4,355.9 215.7,329.3 218.9,329.3 222.2,337.0 225.5,337.0 228.8,325.4 238.6,325.4 241.8,371.0 245.1,371.0 248.4,332.7 251.6,332.7 254.9,344.3 258.2,344.3 261.5,329.3 271.3,329.3 274.5,332.7 277.8,332.7 281.1,322.1 284.3,322.1 287.6,337.0 290.9,337.0 294.1,325.4 303.9,325.4 307.2,337.0 310.4,337.0 313.7,314.4 316.9,314.4 320.2,318.2 323.5,318.2 326.8,299.3 336.6,299.3 339.8,314.4 343.1,314.4 346.4,310.5 349.6,310.5 352.9,339.5 356.2,339.5 359.4,325.4 369.2,325.4 372.5,348.2 375.7,348.2 379.0,333.1 382.2,333.1 385.5,359.4 388.8,359.4 392.1,337.6 401.9,337.6 405.1,363.3 408.4,363.3 411.7,348.2 414.9,348.2 418.2,359.4 421.5,359.4 424.8,340.5 434.6,340.5 437.8,378.1 441.1,378.1 444.4,337.0 447.6,337.0 450.9,352.1 454.2,352.1 457.4,329.3 467.2,329.3 470.5,343.4 473.7,343.4 477.0,314.4 480.2,314.4 483.5,325.0 486.8,325.0 490.1,310.5 499.9,310.5 503.1,332.7 506.4,332.7 509.7,314.4 512.9,314.4 516.2,332.7 519.5,332.7 522.7,292.1 532.5,292.1 535.8,296.0 539.0,296.0 542.3,277.7 545.5,277.7 548.8,292.1 552.1,292.1 555.4,269.0 565.2,269.0 568.4,284.4 571.7,284.4 575.0,269.0 578.2,269.0 581.5,292.1 584.8,292.1 588.1,277.7 597.9,277.7 601.1,292.1 604.4,292.1 607.7,261.2 610.9,261.2 614.2,284.4 617.5,284.4 620.7,254.5 630.5,254.5 633.8,295.0 637.0,295.0 640.3,258.3 643.5,258.3 646.8,279.6 650.1,279.6 653.4,250.6 663.2,250.6 666.4,277.7 669.7,277.7 673.0,254.5 676.2,254.5 679.5,269.0 682.8,269.0 686.0,231.3 695.8,231.3 699.1,250.6 702.3,250.6 705.6,228.4 708.8,228.4 712.1,269.0 715.4,269.0 718.7,254.5 728.5,254.5 731.7,271.9 735.0,271.9 738.3,243.3 741.5,243.3 744.8,265.1 748.1,265.1 751.4,239.4 761.2,239.4 764.4,258.3 767.7,258.3 771.0,239.4 774.2,239.4 777.5,254.5 780.8,254.5 784.0,220.7 793.8,220.7 797.1,250.6 800.3,250.6 803.6,246.4 806.8,246.4 810.1,277.7 813.4,277.7 816.7,235.5 826.5,235.5 829.7,271.9 833.0,271.9 836.3,261.2 839.5,261.2 842.8,292.1 846.1,292.1 849.3,269.3 859.1,269.3 862.4,292.1 865.6,292.1 868.9,288.3 872.1,288.3 875.4,325.4 878.7,325.4 882.0,318.2 891.8,318.2 895.0,340.5 898.3,340.5 901.6,340.5 904.8,340.5 908.1,356.3 911.4,356.3 914.7,333.1 924.5,333.1 927.7,314.4 937.5,314.4 940.8,339.5 944.1,339.5 947.3,329.3 957.1,329.3 960.4,344.3 970.1,344.3 973.4,378.1 976.7,378.1 980.0,352.1 989.8,352.1 993.0,322.1 1002.8,322.1 1006.1,358.8 1009.4,358.8 1012.6,344.3 1022.4,344.3 1025.7,348.2 1035.0,348.2 1035.500,412 56,412" fill="url(#g_log)"/>
<polyline points="56.0,284.4 61.0,295.0 65.5,284.4 75.3,284.4 78.5,303.2 81.8,303.2 85.1,299.3 88.3,299.3 91.6,303.2 94.9,303.2 98.2,288.3 108.0,288.3 111.2,306.6 114.5,306.6 117.8,295.4 121.0,295.4 124.3,324.0 127.6,324.0 130.8,314.4 140.6,314.4 143.9,340.5 147.1,340.5 150.4,325.4 153.6,325.4 156.9,352.1 160.2,352.1 163.5,322.1 173.3,322.1 176.5,344.3 179.8,344.3 183.1,322.1 186.3,322.1 189.6,348.2 192.9,348.2 196.1,322.1 205.9,322.1 209.2,355.9 212.4,355.9 215.7,329.3 218.9,329.3 222.2,337.0 225.5,337.0 228.8,325.4 238.6,325.4 241.8,371.0 245.1,371.0 248.4,332.7 251.6,332.7 254.9,344.3 258.2,344.3 261.5,329.3 271.3,329.3 274.5,332.7 277.8,332.7 281.1,322.1 284.3,322.1 287.6,337.0 290.9,337.0 294.1,325.4 303.9,325.4 307.2,337.0 310.4,337.0 313.7,314.4 316.9,314.4 320.2,318.2 323.5,318.2 326.8,299.3 336.6,299.3 339.8,314.4 343.1,314.4 346.4,310.5 349.6,310.5 352.9,339.5 356.2,339.5 359.4,325.4 369.2,325.4 372.5,348.2 375.7,348.2 379.0,333.1 382.2,333.1 385.5,359.4 388.8,359.4 392.1,337.6 401.9,337.6 405.1,363.3 408.4,363.3 411.7,348.2 414.9,348.2 418.2,359.4 421.5,359.4 424.8,340.5 434.6,340.5 437.8,378.1 441.1,378.1 444.4,337.0 447.6,337.0 450.9,352.1 454.2,352.1 457.4,329.3 467.2,329.3 470.5,343.4 473.7,343.4 477.0,314.4 480.2,314.4 483.5,325.0 486.8,325.0 490.1,310.5 499.9,310.5 503.1,332.7 506.4,332.7 509.7,314.4 512.9,314.4 516.2,332.7 519.5,332.7 522.7,292.1 532.5,292.1 535.8,296.0 539.0,296.0 542.3,277.7 545.5,277.7 548.8,292.1 552.1,292.1 555.4,269.0 565.2,269.0 568.4,284.4 571.7,284.4 575.0,269.0 578.2,269.0 581.5,292.1 584.8,292.1 588.1,277.7 597.9,277.7 601.1,292.1 604.4,292.1 607.7,261.2 610.9,261.2 614.2,284.4 617.5,284.4 620.7,254.5 630.5,254.5 633.8,295.0 637.0,295.0 640.3,258.3 643.5,258.3 646.8,279.6 650.1,279.6 653.4,250.6 663.2,250.6 666.4,277.7 669.7,277.7 673.0,254.5 676.2,254.5 679.5,269.0 682.8,269.0 686.0,231.3 695.8,231.3 699.1,250.6 702.3,250.6 705.6,228.4 708.8,228.4 712.1,269.0 715.4,269.0 718.7,254.5 728.5,254.5 731.7,271.9 735.0,271.9 738.3,243.3 741.5,243.3 744.8,265.1 748.1,265.1 751.4,239.4 761.2,239.4 764.4,258.3 767.7,258.3 771.0,239.4 774.2,239.4 777.5,254.5 780.8,254.5 784.0,220.7 793.8,220.7 797.1,250.6 800.3,250.6 803.6,246.4 806.8,246.4 810.1,277.7 813.4,277.7 816.7,235.5 826.5,235.5 829.7,271.9 833.0,271.9 836.3,261.2 839.5,261.2 842.8,292.1 846.1,292.1 849.3,269.3 859.1,269.3 862.4,292.1 865.6,292.1 868.9,288.3 872.1,288.3 875.4,325.4 878.7,325.4 882.0,318.2 891.8,318.2 895.0,340.5 898.3,340.5 901.6,340.5 904.8,340.5 908.1,356.3 911.4,356.3 914.7,333.1 924.5,333.1 927.7,314.4 937.5,314.4 940.8,339.5 944.1,339.5 947.3,329.3 957.1,329.3 960.4,344.3 970.1,344.3 973.4,378.1 976.7,378.1 980.0,352.1 989.8,352.1 993.0,322.1 1002.8,322.1 1006.1,358.8 1009.4,358.8 1012.6,344.3 1022.4,344.3 1025.7,348.2 1035.0,348.2" fill="none" stroke="#f2495c" stroke-width="1" stroke-linejoin="round"/>
<polygon points="56.0,309.5 61.0,322.1 65.5,299.3 75.3,299.3 78.5,352.4 81.8,352.4 85.1,329.8 88.3,329.8 91.6,356.3 94.9,356.3 98.2,329.8 108.0,329.8 111.2,340.5 114.5,340.5 117.8,310.5 121.0,310.5 124.3,325.4 127.6,325.4 130.8,295.4 140.6,295.4 143.9,322.1 147.1,322.1 150.4,310.5 153.6,310.5 156.9,318.2 160.2,318.2 163.5,288.3 173.3,288.3 176.5,295.4 179.8,295.4 183.1,258.3 186.3,258.3 189.6,277.1 192.9,277.1 196.1,258.3 205.9,258.3 209.2,265.1 212.4,265.1 215.7,254.5 218.9,254.5 222.2,288.3 225.5,288.3 228.8,265.1 238.6,265.1 241.8,284.4 245.1,284.4 248.4,258.3 251.6,258.3 254.9,279.6 258.2,279.6 261.5,246.7 271.3,246.7 274.5,269.0 277.8,269.0 281.1,235.5 284.3,235.5 287.6,261.2 290.9,261.2 294.1,258.3 303.9,258.3 307.2,287.7 310.4,287.7 313.7,258.3 316.9,258.3 320.2,287.7 323.5,287.7 326.8,258.3 336.6,258.3 339.8,268.4 343.1,268.4 346.4,246.7 349.6,246.7 352.9,276.7 356.2,276.7 359.4,261.2 369.2,261.2 372.5,299.3 375.7,299.3 379.0,258.3 382.2,258.3 385.5,276.7 388.8,276.7 392.1,254.5 401.9,254.5 405.1,265.1 408.4,265.1 411.7,243.3 414.9,243.3 418.2,265.1 421.5,265.1 424.8,250.6 434.6,250.6 437.8,276.7 441.1,276.7 444.4,254.5 447.6,254.5 450.9,288.3 454.2,288.3 457.4,258.3 467.2,258.3 470.5,292.1 473.7,292.1 477.0,288.3 480.2,288.3 483.5,292.1 486.8,292.1 490.1,273.4 499.9,273.4 503.1,302.8 506.4,302.8 509.7,280.6 512.9,280.6 516.2,310.5 519.5,310.5 522.7,299.3 532.5,299.3 535.8,322.1 539.0,322.1 542.3,310.5 545.5,310.5 548.8,325.4 552.1,325.4 555.4,310.5 565.2,310.5 568.4,352.1 571.7,352.1 575.0,318.2 578.2,318.2 581.5,340.5 584.8,340.5 588.1,329.3 597.9,329.3 601.1,352.1 604.4,352.1 607.7,333.1 610.9,333.1 614.2,348.2 617.5,348.2 620.7,307.0 630.5,307.0 633.8,329.3 637.0,329.3 640.3,295.4 643.5,295.4 646.8,325.4 650.1,325.4 653.4,307.0 663.2,307.0 666.4,310.5 669.7,310.5 673.0,303.2 676.2,303.2 679.5,322.1 682.8,322.1 686.0,288.3 695.8,288.3 699.1,310.5 702.3,310.5 705.6,280.6 708.8,280.6 712.1,292.1 715.4,292.1 718.7,280.6 728.5,280.6 731.7,292.1 735.0,292.1 738.3,280.6 741.5,280.6 744.8,295.4 748.1,295.4 751.4,288.3 761.2,288.3 764.4,322.1 767.7,322.1 771.0,314.4 774.2,314.4 777.5,325.4 780.8,325.4 784.0,303.2 793.8,303.2 797.1,322.1 800.3,322.1 803.6,295.4 806.8,295.4 810.1,337.0 813.4,337.0 816.7,325.4 826.5,325.4 829.7,359.2 833.0,359.2 836.3,348.6 839.5,348.6 842.8,367.1 846.1,367.1 849.3,356.3 859.1,356.3 862.4,363.6 865.6,363.6 868.9,318.2 872.1,318.2 875.4,352.1 878.7,352.1 882.0,348.6 891.8,348.6 895.0,378.1 898.3,378.1 901.6,374.3 904.8,374.3 908.1,386.4 911.4,386.4 914.7,367.5 924.5,367.5 927.7,340.5 937.5,340.5 940.8,348.2 944.1,348.2 947.3,337.6 957.1,337.6 960.4,344.3 970.1,344.3 973.4,367.1 976.7,367.1 980.0,348.6 989.8,348.6 993.0,333.1 1002.8,333.1 1006.1,344.3 1009.4,344.3 1012.6,307.0 1022.4,307.0 1025.7,295.0 1035.0,295.0 1035.500,412 56,412" fill="url(#g_pay)"/>
<polyline points="56.0,309.5 61.0,322.1 65.5,299.3 75.3,299.3 78.5,352.4 81.8,352.4 85.1,329.8 88.3,329.8 91.6,356.3 94.9,356.3 98.2,329.8 108.0,329.8 111.2,340.5 114.5,340.5 117.8,310.5 121.0,310.5 124.3,325.4 127.6,325.4 130.8,295.4 140.6,295.4 143.9,322.1 147.1,322.1 150.4,310.5 153.6,310.5 156.9,318.2 160.2,318.2 163.5,288.3 173.3,288.3 176.5,295.4 179.8,295.4 183.1,258.3 186.3,258.3 189.6,277.1 192.9,277.1 196.1,258.3 205.9,258.3 209.2,265.1 212.4,265.1 215.7,254.5 218.9,254.5 222.2,288.3 225.5,288.3 228.8,265.1 238.6,265.1 241.8,284.4 245.1,284.4 248.4,258.3 251.6,258.3 254.9,279.6 258.2,279.6 261.5,246.7 271.3,246.7 274.5,269.0 277.8,269.0 281.1,235.5 284.3,235.5 287.6,261.2 290.9,261.2 294.1,258.3 303.9,258.3 307.2,287.7 310.4,287.7 313.7,258.3 316.9,258.3 320.2,287.7 323.5,287.7 326.8,258.3 336.6,258.3 339.8,268.4 343.1,268.4 346.4,246.7 349.6,246.7 352.9,276.7 356.2,276.7 359.4,261.2 369.2,261.2 372.5,299.3 375.7,299.3 379.0,258.3 382.2,258.3 385.5,276.7 388.8,276.7 392.1,254.5 401.9,254.5 405.1,265.1 408.4,265.1 411.7,243.3 414.9,243.3 418.2,265.1 421.5,265.1 424.8,250.6 434.6,250.6 437.8,276.7 441.1,276.7 444.4,254.5 447.6,254.5 450.9,288.3 454.2,288.3 457.4,258.3 467.2,258.3 470.5,292.1 473.7,292.1 477.0,288.3 480.2,288.3 483.5,292.1 486.8,292.1 490.1,273.4 499.9,273.4 503.1,302.8 506.4,302.8 509.7,280.6 512.9,280.6 516.2,310.5 519.5,310.5 522.7,299.3 532.5,299.3 535.8,322.1 539.0,322.1 542.3,310.5 545.5,310.5 548.8,325.4 552.1,325.4 555.4,310.5 565.2,310.5 568.4,352.1 571.7,352.1 575.0,318.2 578.2,318.2 581.5,340.5 584.8,340.5 588.1,329.3 597.9,329.3 601.1,352.1 604.4,352.1 607.7,333.1 610.9,333.1 614.2,348.2 617.5,348.2 620.7,307.0 630.5,307.0 633.8,329.3 637.0,329.3 640.3,295.4 643.5,295.4 646.8,325.4 650.1,325.4 653.4,307.0 663.2,307.0 666.4,310.5 669.7,310.5 673.0,303.2 676.2,303.2 679.5,322.1 682.8,322.1 686.0,288.3 695.8,288.3 699.1,310.5 702.3,310.5 705.6,280.6 708.8,280.6 712.1,292.1 715.4,292.1 718.7,280.6 728.5,280.6 731.7,292.1 735.0,292.1 738.3,280.6 741.5,280.6 744.8,295.4 748.1,295.4 751.4,288.3 761.2,288.3 764.4,322.1 767.7,322.1 771.0,314.4 774.2,314.4 777.5,325.4 780.8,325.4 784.0,303.2 793.8,303.2 797.1,322.1 800.3,322.1 803.6,295.4 806.8,295.4 810.1,337.0 813.4,337.0 816.7,325.4 826.5,325.4 829.7,359.2 833.0,359.2 836.3,348.6 839.5,348.6 842.8,367.1 846.1,367.1 849.3,356.3 859.1,356.3 862.4,363.6 865.6,363.6 868.9,318.2 872.1,318.2 875.4,352.1 878.7,352.1 882.0,348.6 891.8,348.6 895.0,378.1 898.3,378.1 901.6,374.3 904.8,374.3 908.1,386.4 911.4,386.4 914.7,367.5 924.5,367.5 927.7,340.5 937.5,340.5 940.8,348.2 944.1,348.2 947.3,337.6 957.1,337.6 960.4,344.3 970.1,344.3 973.4,367.1 976.7,367.1 980.0,348.6 989.8,348.6 993.0,333.1 1002.8,333.1 1006.1,344.3 1009.4,344.3 1012.6,307.0 1022.4,307.0 1025.7,295.0 1035.0,295.0" fill="none" stroke="#5794f2" stroke-width="1" stroke-linejoin="round"/>
</g>
</svg>
<div class="sw" style="left:24px;top:389px;background:#73bf69"></div><div class="leg" style="left:46px;top:383px">{http_target="/account"}</div>
<div class="sw" style="left:188px;top:389px;background:#f2cc0c"></div><div class="leg" style="left:210px;top:383px">{http_target="/cart"}</div>
<div class="sw" style="left:330px;top:389px;background:#8ab8ff"></div><div class="leg" style="left:352px;top:383px">{http_target="/fastcache"}</div>
<div class="sw" style="left:504px;top:389px;background:#ff780a"></div><div class="leg" style="left:525.5px;top:383px">{http_target="/health"}</div>
<div class="sw" style="left:658px;top:389px;background:#f2495c"></div><div class="leg" style="left:679.5px;top:383px">{http_target="/login"}</div>
<div class="sw" style="left:804px;top:389px;background:#5794f2"></div><div class="leg" style="left:825.5px;top:383px">{http_target="/payment"}</div>
</div>
<div class="panel" style="left:1077px;top:53px;width:525px;height:144px">
<div class="ptitle" style="letter-spacing:-0.28px"><span>Overall Error %age</span></div>
<svg class="abs" style="left:0;top:0" width="523" height="142">
<path d="M214.33 113.03A49.6 49.6 0 1 1 308.67 113.03L292.50 107.77A32.6 32.6 0 1 0 230.50 107.77Z" fill="#22252b"/>
<path d="M214.33 113.03A49.6 49.6 0 0 1 267.97 48.52L265.76 65.38A32.6 32.6 0 0 0 230.50 107.77Z" fill="#73bf69"/>
<path d="M210.43 114.29A53.7 53.7 0 1 1 312.57 114.29L310.19 113.52A51.2 51.2 0 1 0 212.81 113.52Z" fill="#73bf69"/>
<text x="261.5" y="114" text-anchor="middle" font-size="28" fill="#73bf69" stroke="#73bf69" stroke-width="0.7" letter-spacing="0.3">1.12</text>
</svg></div>
<div class="panel" style="left:1077px;top:205px;width:525px;height:258px">
<div class="ptitle" style="letter-spacing:-0.07px"><span>Error Percentages by Target</span></div>
<div class="stat-l" style="left:12px;top:44px">/account</div>
<div class="stat-v g" style="left:11px;top:64px">2.94</div>
<div class="stat-l" style="left:187px;top:44px">/cart</div>
<div class="stat-v r" style="left:186px;top:64px">6</div>
<div class="stat-l" style="left:363px;top:44px">/fastcache</div>
<div class="stat-v g" style="left:362px;top:64px">3.95</div>
<div class="stat-l" style="left:12px;top:158px">/health</div>
<div class="stat-v r" style="left:11px;top:178px">4.41</div>
<div class="stat-l" style="left:187px;top:158px">/login</div>
<div class="stat-v g" style="left:186px;top:178px">3.77</div>
<div class="stat-l" style="left:363px;top:158px">/payment</div>
<div class="stat-v r" style="left:362px;top:178px">7.46</div>
<svg class="abs" style="left:0;top:0" width="523" height="256">
<polygon points="0.0,121.0 1.0,129.9 5.8,128.7 12.4,130.5 15.7,129.9 19.0,125.4 21.7,125.0 24.5,128.1 27.9,128.7 30.1,133.2 33.4,138.2 40.0,137.8 42.2,134.3 46.6,129.9 49.9,133.2 53.2,131.6 60.9,132.7 65.3,129.2 69.7,129.9 74.1,128.3 79.6,133.2 84.0,131.0 89.6,128.1 94.0,121.7 97.3,123.7 100.6,125.9 104.5,119.9 108.3,123.7 111.6,118.8 115.3,114.9 118.2,118.8 121.5,121.0 124.8,125.0 128.1,127.6 130.3,128.7 133.6,126.5 136.9,129.9 140.2,131.4 143.5,132.1 147.9,138.0 152.4,137.6 153.9,129.9 156.8,128.7 160.1,132.1 164.5,133.2 170.0,135.8 172.0,133.2 172,142 0,142" fill="#2a3d2f"/>
<polyline points="0.0,121.0 1.0,129.9 5.8,128.7 12.4,130.5 15.7,129.9 19.0,125.4 21.7,125.0 24.5,128.1 27.9,128.7 30.1,133.2 33.4,138.2 40.0,137.8 42.2,134.3 46.6,129.9 49.9,133.2 53.2,131.6 60.9,132.7 65.3,129.2 69.7,129.9 74.1,128.3 79.6,133.2 84.0,131.0 89.6,128.1 94.0,121.7 97.3,123.7 100.6,125.9 104.5,119.9 108.3,123.7 111.6,118.8 115.3,114.9 118.2,118.8 121.5,121.0 124.8,125.0 128.1,127.6 130.3,128.7 133.6,126.5 136.9,129.9 140.2,131.4 143.5,132.1 147.9,138.0 152.4,137.6 153.9,129.9 156.8,128.7 160.1,132.1 164.5,133.2 170.0,135.8 172.0,133.2" fill="none" stroke="#73bf69" stroke-width="1.1" stroke-linejoin="round"/>
<polygon points="175.0,133.8 179.9,135.4 185.4,134.9 188.7,132.1 192.0,127.0 194.9,127.2 196.4,133.2 201.9,132.7 206.3,134.3 215.2,132.5 220.7,132.7 222.2,136.5 223.5,132.7 224.6,136.5 226.2,132.5 237.2,132.5 240.5,127.2 243.8,121.0 245.6,118.8 248.2,120.4 250.9,118.4 253.7,121.0 257.0,125.4 261.4,128.7 264.7,125.0 266.9,114.4 269.1,113.3 270.7,114.9 272.0,113.1 273.6,117.7 276.9,122.1 280.2,124.8 284.6,122.1 289.0,121.0 293.4,123.7 297.8,126.5 300.2,128.7 301.1,138.2 314.3,138.7 316.5,134.7 317.6,138.2 319.2,131.6 325.3,129.9 327.5,125.9 329.7,128.3 334.2,127.0 338.1,125.0 340.8,125.9 345.2,122.8 348.0,124.3 348,142 175,142" fill="#48252c"/>
<polyline points="175.0,133.8 179.9,135.4 185.4,134.9 188.7,132.1 192.0,127.0 194.9,127.2 196.4,133.2 201.9,132.7 206.3,134.3 215.2,132.5 220.7,132.7 222.2,136.5 223.5,132.7 224.6,136.5 226.2,132.5 237.2,132.5 240.5,127.2 243.8,121.0 245.6,118.8 248.2,120.4 250.9,118.4 253.7,121.0 257.0,125.4 261.4,128.7 264.7,125.0 266.9,114.4 269.1,113.3 270.7,114.9 272.0,113.1 273.6,117.7 276.9,122.1 280.2,124.8 284.6,122.1 289.0,121.0 293.4,123.7 297.8,126.5 300.2,128.7 301.1,138.2 314.3,138.7 316.5,134.7 317.6,138.2 319.2,131.6 325.3,129.9 327.5,125.9 329.7,128.3 334.2,127.0 338.1,125.0 340.8,125.9 345.2,122.8 348.0,124.3" fill="none" stroke="#f2495c" stroke-width="1.1" stroke-linejoin="round"/>
<polygon points="351.0,138.8 356.8,139.2 358.5,135.9 360.9,134.8 366.1,135.4 368.4,132.5 369.9,127.3 374.7,126.5 378.2,128.4 381.6,129.3 384.5,129.6 386.8,127.3 389.7,126.5 392.0,129.3 394.9,126.7 396.1,121.5 397.5,120.1 399.5,122.1 401.8,123.6 403.6,129.0 405.9,130.2 409.3,129.3 414.0,129.6 416.3,127.3 418.4,125.3 420.9,127.6 422.6,128.4 424.1,127.3 426.7,131.3 428.4,129.6 429.9,135.7 431.9,132.5 435.3,129.3 437.6,126.1 440.5,126.7 443.4,126.1 445.7,127.9 447.2,126.7 450.3,129.6 452.3,129.3 455.0,125.8 456.7,127.6 458.8,125.3 461.3,127.9 463.6,129.9 467.1,134.2 468.8,135.0 470.0,138.3 474.0,139.2 479.8,138.8 483.8,139.2 485.0,136.2 486.1,136.2 487.3,139.2 492.5,138.8 500.6,138.0 502.3,133.9 506.3,135.0 512.1,133.4 514.4,130.8 516.1,126.5 517.7,127.3 519.0,129.9 523.0,129.9 523,142 351,142" fill="#2a3d2f"/>
<polyline points="351.0,138.8 356.8,139.2 358.5,135.9 360.9,134.8 366.1,135.4 368.4,132.5 369.9,127.3 374.7,126.5 378.2,128.4 381.6,129.3 384.5,129.6 386.8,127.3 389.7,126.5 392.0,129.3 394.9,126.7 396.1,121.5 397.5,120.1 399.5,122.1 401.8,123.6 403.6,129.0 405.9,130.2 409.3,129.3 414.0,129.6 416.3,127.3 418.4,125.3 420.9,127.6 422.6,128.4 424.1,127.3 426.7,131.3 428.4,129.6 429.9,135.7 431.9,132.5 435.3,129.3 437.6,126.1 440.5,126.7 443.4,126.1 445.7,127.9 447.2,126.7 450.3,129.6 452.3,129.3 455.0,125.8 456.7,127.6 458.8,125.3 461.3,127.9 463.6,129.9 467.1,134.2 468.8,135.0 470.0,138.3 474.0,139.2 479.8,138.8 483.8,139.2 485.0,136.2 486.1,136.2 487.3,139.2 492.5,138.8 500.6,138.0 502.3,133.9 506.3,135.0 512.1,133.4 514.4,130.8 516.1,126.5 517.7,127.3 519.0,129.9 523.0,129.9" fill="none" stroke="#73bf69" stroke-width="1.1" stroke-linejoin="round"/>
<polygon points="0.0,248.0 8.0,246.9 17.9,246.2 24.5,247.5 27.9,251.3 30.1,254.6 32.3,251.7 38.9,250.9 41.1,248.0 47.7,246.9 51.0,241.8 56.5,240.3 62.0,240.7 65.3,244.7 70.8,245.3 74.1,248.0 79.6,248.4 81.8,251.7 84.0,248.0 86.2,251.7 88.4,246.9 94.0,246.9 98.4,246.4 100.6,241.4 106.1,240.3 109.4,237.0 113.8,235.9 117.1,234.3 120.4,235.9 123.7,239.8 128.1,236.5 130.3,239.2 134.7,240.7 140.2,237.0 146.8,236.3 151.3,241.8 155.7,240.3 160.1,239.2 163.4,233.7 165.6,238.1 170.0,239.2 172.0,242.0 172,256 0,256" fill="#48252c"/>
<polyline points="0.0,248.0 8.0,246.9 17.9,246.2 24.5,247.5 27.9,251.3 30.1,254.6 32.3,251.7 38.9,250.9 41.1,248.0 47.7,246.9 51.0,241.8 56.5,240.3 62.0,240.7 65.3,244.7 70.8,245.3 74.1,248.0 79.6,248.4 81.8,251.7 84.0,248.0 86.2,251.7 88.4,246.9 94.0,246.9 98.4,246.4 100.6,241.4 106.1,240.3 109.4,237.0 113.8,235.9 117.1,234.3 120.4,235.9 123.7,239.8 128.1,236.5 130.3,239.2 134.7,240.7 140.2,237.0 146.8,236.3 151.3,241.8 155.7,240.3 160.1,239.2 163.4,233.7 165.6,238.1 170.0,239.2 172.0,242.0" fill="none" stroke="#f2495c" stroke-width="1.1" stroke-linejoin="round"/>
<polygon points="175.0,237.4 179.9,238.1 181.0,241.4 185.4,239.8 189.8,240.9 192.0,244.7 194.2,239.2 198.6,235.9 203.0,234.1 206.3,233.7 209.6,238.1 214.1,231.5 216.3,228.2 220.7,228.8 224.0,231.9 228.4,229.3 231.2,226.6 233.9,230.4 237.2,234.8 240.5,231.5 242.7,230.4 243.8,217.1 247.1,219.3 250.4,216.0 254.8,213.4 260.3,213.4 263.6,216.0 269.1,214.9 272.5,219.3 276.4,222.6 278.0,231.5 281.3,239.2 285.7,245.8 291.2,244.7 294.5,246.9 300.0,247.5 307.7,247.5 314.3,245.8 317.6,241.4 320.9,244.2 325.3,244.7 326.4,249.1 328.6,245.1 334.2,243.6 337.5,242.0 340.8,244.2 348.0,243.6 348,256 175,256" fill="#2a3d2f"/>
<polyline points="175.0,237.4 179.9,238.1 181.0,241.4 185.4,239.8 189.8,240.9 192.0,244.7 194.2,239.2 198.6,235.9 203.0,234.1 206.3,233.7 209.6,238.1 214.1,231.5 216.3,228.2 220.7,228.8 224.0,231.9 228.4,229.3 231.2,226.6 233.9,230.4 237.2,234.8 240.5,231.5 242.7,230.4 243.8,217.1 247.1,219.3 250.4,216.0 254.8,213.4 260.3,213.4 263.6,216.0 269.1,214.9 272.5,219.3 276.4,222.6 278.0,231.5 281.3,239.2 285.7,245.8 291.2,244.7 294.5,246.9 300.0,247.5 307.7,247.5 314.3,245.8 317.6,241.4 320.9,244.2 325.3,244.7 326.4,249.1 328.6,245.1 334.2,243.6 337.5,242.0 340.8,244.2 348.0,243.6" fill="none" stroke="#73bf69" stroke-width="1.1" stroke-linejoin="round"/>
<polygon points="351.0,245.4 355.1,243.6 357.4,249.4 358.5,244.8 360.9,244.2 364.3,245.7 367.8,245.4 373.6,246.9 381.6,246.9 383.9,251.2 385.7,251.2 386.8,247.3 390.3,247.3 392.0,251.2 397.6,251.2 399.0,243.6 401.8,243.4 404.7,239.0 406.8,237.0 408.2,239.0 412.8,239.6 417.4,238.8 419.2,238.5 420.9,241.6 423.8,237.6 427.8,237.9 429.9,236.7 431.9,239.0 433.0,245.4 436.5,245.7 438.2,250.3 442.8,250.0 444.9,244.8 448.6,243.6 450.3,232.1 452.1,229.8 453.8,223.4 456.1,226.1 459.6,226.3 462.5,219.4 464.2,216.5 465.3,220.0 468.2,216.5 472.3,209.6 474.6,209.9 476.1,204.4 478.6,211.3 480.7,212.5 481.9,209.0 483.8,215.4 485.0,222.9 486.1,224.0 487.3,230.4 489.6,223.8 491.3,224.6 493.1,224.0 495.4,237.3 497.1,237.9 499.2,234.6 501.1,240.2 504.0,243.1 506.9,244.2 511.0,243.6 513.3,239.0 516.1,234.4 518.5,232.1 520.2,226.6 521.3,227.5 521.9,232.1 523.0,232.7 523,256 351,256" fill="#48252c"/>
<polyline points="351.0,245.4 355.1,243.6 357.4,249.4 358.5,244.8 360.9,244.2 364.3,245.7 367.8,245.4 373.6,246.9 381.6,246.9 383.9,251.2 385.7,251.2 386.8,247.3 390.3,247.3 392.0,251.2 397.6,251.2 399.0,243.6 401.8,243.4 404.7,239.0 406.8,237.0 408.2,239.0 412.8,239.6 417.4,238.8 419.2,238.5 420.9,241.6 423.8,237.6 427.8,237.9 429.9,236.7 431.9,239.0 433.0,245.4 436.5,245.7 438.2,250.3 442.8,250.0 444.9,244.8 448.6,243.6 450.3,232.1 452.1,229.8 453.8,223.4 456.1,226.1 459.6,226.3 462.5,219.4 464.2,216.5 465.3,220.0 468.2,216.5 472.3,209.6 474.6,209.9 476.1,204.4 478.6,211.3 480.7,212.5 481.9,209.0 483.8,215.4 485.0,222.9 486.1,224.0 487.3,230.4 489.6,223.8 491.3,224.6 493.1,224.0 495.4,237.3 497.1,237.9 499.2,234.6 501.1,240.2 504.0,243.1 506.9,244.2 511.0,243.6 513.3,239.0 516.1,234.4 518.5,232.1 520.2,226.6 521.3,227.5 521.9,232.1 523.0,232.7" fill="none" stroke="#f2495c" stroke-width="1.1" stroke-linejoin="round"/>
</svg>
</div>
<div class="panel" style="left:11px;top:471px;width:725px;height:330px">
<div class="ptitle" style="letter-spacing:0px"><span>Top 10 Highest Endpoint Latencies Over Last Minute</span></div>
<div class="abs" style="left:0;top:32px;width:723px;height:33px;background:#22252b"><div class="th" style="left:6px;letter-spacing:0.13px">HTTP Method</div><div class="th" style="left:247px">Endpoint</div><div class="th" style="right:10px;letter-spacing:0.2px">Latency (ms)</div><div class="abs" style="left:240px;top:0;width:1px;height:33px;background:#181b1f"></div><div class="abs" style="left:481px;top:0;width:1px;height:33px;background:#181b1f"></div></div>
<div class="row" style="top:65px"><div class="td" style="left:6px;letter-spacing:-0.6px">POST</div><div class="td" style="left:247px;letter-spacing:0.5px">/login</div><div class="td" style="right:16px;letter-spacing:0.1px">5140</div></div>
<div class="row" style="top:100px"><div class="td" style="left:6px;letter-spacing:-0.6px">POST</div><div class="td" style="left:247px;letter-spacing:0.5px">/fastcache</div><div class="td" style="right:16px;letter-spacing:0.1px">4351</div></div>
<div class="row" style="top:135px"><div class="td" style="left:6px;letter-spacing:-0.6px">POST</div><div class="td" style="left:247px;letter-spacing:0.5px">/account</div><div class="td" style="right:16px;letter-spacing:0.1px">3942</div></div>
<div class="row" style="top:170px"><div class="td" style="left:6px;letter-spacing:-0.6px">POST</div><div class="td" style="left:247px;letter-spacing:0.5px">/payment</div><div class="td" style="right:16px;letter-spacing:0.1px">2467</div></div>
<div class="row" style="top:205px"><div class="td" style="left:6px;letter-spacing:-0.6px">POST</div><div class="td" style="left:247px;letter-spacing:0.5px">/cart</div><div class="td" style="right:16px;letter-spacing:0.1px">2153</div></div>
<div class="row" style="top:240px"><div class="td" style="left:6px;letter-spacing:-0.6px">POST</div><div class="td" style="left:247px;letter-spacing:0.5px">/health</div><div class="td" style="right:16px;letter-spacing:0.1px">1787</div></div>
<div class="row" style="top:275px"><div class="td" style="left:6px;letter-spacing:-0.6px">GET</div><div class="td" style="left:247px;letter-spacing:0.5px">/login</div><div class="td" style="right:16px;letter-spacing:0.1px">1672</div></div>
<div class="row" style="top:310px"><div class="td" style="left:6px;letter-spacing:-0.6px">GET</div><div class="td" style="left:247px;letter-spacing:0.5px">/cart</div><div class="td" style="right:16px;letter-spacing:0.1px">1501</div></div>
<div class="abs" style="left:240px;top:65px;width:1px;height:300px;background:#23252a"></div><div class="abs" style="left:481px;top:65px;width:1px;height:300px;background:#23252a"></div>
</div>
<div class="panel" style="left:744px;top:471px;width:858px;height:330px">
<div class="ptitle" style="letter-spacing:0.07px"><span>All Endpoint Latencies in ms (Last 10 mins)</span></div>
<svg class="abs" style="left:0;top:0" width="856" height="328" viewBox="745 472 856 328">
<path d="M779 554.5H1568.500" stroke="#2c2f35" stroke-width="1"/>
<text x="774" y="557.5" text-anchor="end" font-size="12" fill="#c3c4d0">400</text>
<path d="M779 603.5H1568.500" stroke="#2c2f35" stroke-width="1"/>
<text x="774" y="606.5" text-anchor="end" font-size="12" fill="#c3c4d0">300</text>
<path d="M779 652.5H1568.500" stroke="#2c2f35" stroke-width="1"/>
<text x="774" y="655.5" text-anchor="end" font-size="12" fill="#c3c4d0">200</text>
<path d="M779 701.5H1568.500" stroke="#2c2f35" stroke-width="1"/>
<text x="774" y="704.5" text-anchor="end" font-size="12" fill="#c3c4d0">100</text>
<path d="M779 750.5H1568.500" stroke="#2c2f35" stroke-width="1"/>
<text x="774" y="753.5" text-anchor="end" font-size="12" fill="#c3c4d0">0</text>
<path d="M853.5 530V754.500" stroke="#2c2f35" stroke-width="1"/>
<text x="853.0" y="768" text-anchor="middle" font-size="12" fill="#c3c4d0">14:55:30</text>
<path d="M932.5 530V754.500" stroke="#2c2f35" stroke-width="1"/>
<text x="931.6" y="768" text-anchor="middle" font-size="12" fill="#c3c4d0">14:56:00</text>
<path d="M1010.5 530V754.500" stroke="#2c2f35" stroke-width="1"/>
<text x="1010.2" y="768" text-anchor="middle" font-size="12" fill="#c3c4d0">14:56:30</text>
<path d="M1089.5 530V754.500" stroke="#2c2f35" stroke-width="1"/>
<text x="1088.7" y="768" text-anchor="middle" font-size="12" fill="#c3c4d0">14:57:00</text>
<path d="M1167.5 530V754.500" stroke="#2c2f35" stroke-width="1"/>
<text x="1167.3" y="768" text-anchor="middle" font-size="12" fill="#c3c4d0">14:57:30</text>
<path d="M1246.5 530V754.500" stroke="#2c2f35" stroke-width="1"/>
<text x="1245.9" y="768" text-anchor="middle" font-size="12" fill="#c3c4d0">14:58:00</text>
<path d="M1324.5 530V754.500" stroke="#2c2f35" stroke-width="1"/>
<text x="1324.5" y="768" text-anchor="middle" font-size="12" fill="#c3c4d0">14:58:30</text>
<path d="M1403.5 530V754.500" stroke="#2c2f35" stroke-width="1"/>
<text x="1403.1" y="768" text-anchor="middle" font-size="12" fill="#c3c4d0">14:59:00</text>
<path d="M1482.5 530V754.500" stroke="#2c2f35" stroke-width="1"/>
<text x="1481.6" y="768" text-anchor="middle" font-size="12" fill="#c3c4d0">14:59:30</text>
<path d="M1560.5 530V754.500" stroke="#2c2f35" stroke-width="1"/>
<text x="1560.2" y="768" text-anchor="middle" font-size="12" fill="#c3c4d0">15:00:00</text>
<polygon points="783.5,741.5 1275.0,741.5 1276.0,742.3 1469.8,742.3 1470.2,641.4 1479.7,641.4 1480.4,587.5 1489.6,587.5 1491.7,586.5 1516.5,586.5 1519.4,585.3 1521.5,585.3 1522.2,563.4 1532.1,563.4 1534.2,556.7 1542.0,556.7 1544.6,553.5 1548.4,553.5 1549.8,554.5 1557.6,554.5 1559.7,553.5 1568.3,553.5 1568.3,750.5 783.5,750.5" fill="#19213e"/>
<polygon points="783.5,742.0 1470.0,742.0 1470.4,670.5 1480.2,670.5 1480.8,592.4 1521.5,592.4 1522.2,569.5 1547.7,569.5 1549.8,570.5 1557.6,570.5 1560.2,573.6 1568.3,573.6 1568.3,750.5 783.5,750.5" fill="#37333a"/>
<polygon points="783.5,743.4 1249.4,743.4 1250.0,744.7 1307.6,744.7 1308.0,743.4 1312.0,743.4 1312.5,744.7 1444.0,744.7 1444.5,743.4 1459.0,743.4 1459.5,738.0 1469.0,738.0 1469.5,717.2 1479.0,717.2 1480.4,636.4 1516.5,636.4 1518.6,635.2 1521.0,635.2 1521.9,585.3 1532.1,585.3 1533.8,587.5 1547.7,587.5 1549.4,594.3 1568.3,594.3 1568.3,750.5 783.5,750.5" fill="#5c625a"/>
<polygon points="1275.8,742.5 1277.0,738.0 1458.9,738.0 1459.5,736.0 1469.0,736.0 1469.5,716.0 1481.0,716.0 1482.5,646.3 1491.7,645.6 1505.9,645.1 1506.6,639.2 1512.3,638.5 1517.2,637.5 1521.5,636.4 1522.9,609.4 1542.0,609.4 1544.2,608.4 1547.7,608.7 1549.1,611.3 1557.6,611.3 1559.7,609.4 1568.3,609.4 1568.3,750.5 1275.8,750.5" fill="#736555"/>
<polygon points="783.5,741.0 1469.5,741.0 1470.0,718.0 1481.0,718.0 1481.8,651.6 1505.9,651.6 1507.3,650.2 1521.5,650.2 1522.3,626.4 1532.1,626.2 1534.2,625.4 1542.0,625.0 1544.9,623.6 1547.7,623.9 1549.8,624.7 1568.3,624.6 1568.3,750.5 783.5,750.5" fill="#7d6c70"/>
<polygon points="783.5,737.2 1276.5,737.2 1277.0,739.0 1443.0,739.0 1444.5,736.0 1469.5,736.0 1470.0,719.0 1481.0,719.0 1481.8,687.5 1490.3,687.5 1491.7,686.0 1496.0,686.0 1497.4,687.5 1505.9,687.5 1507.3,685.3 1521.5,685.3 1522.2,655.3 1532.1,655.3 1533.5,654.2 1542.0,654.2 1544.2,653.2 1557.6,653.2 1559.7,654.5 1568.3,654.5 1568.3,750.5 783.5,750.5" fill="#786473"/>
<polygon points="783.5,740.0 1469.5,740.0 1470.0,720.0 1481.0,720.0 1481.8,689.6 1521.5,689.6 1522.2,678.5 1532.1,678.3 1533.8,676.4 1557.6,676.4 1559.7,677.6 1568.3,677.6 1568.3,750.5 783.5,750.5" fill="#80697a"/>
<polygon points="783.5,724.4 1232.0,724.4 1233.0,725.3 1244.7,725.3 1245.5,724.4 1271.0,724.4 1272.0,725.3 1303.0,725.3 1304.0,724.4 1354.0,724.4 1355.0,725.3 1391.0,725.3 1392.0,724.4 1469.0,724.4 1470.5,711.3 1479.0,711.3 1481.8,692.4 1521.5,692.4 1522.2,686.0 1542.0,685.6 1544.2,684.6 1568.3,684.6 1568.3,750.5 783.5,750.5" fill="#826e69"/>
<polygon points="783.5,728.2 1254.0,728.2 1255.5,729.5 1469.0,729.5 1470.0,721.0 1481.0,721.0 1481.8,699.5 1490.0,699.5 1492.4,698.1 1496.0,698.1 1497.4,699.5 1505.9,699.5 1507.3,698.1 1521.5,698.1 1522.2,694.6 1532.1,694.3 1534.2,692.4 1542.0,692.1 1544.9,691.0 1548.4,691.3 1549.8,692.4 1568.3,692.4 1568.3,750.5 783.5,750.5" fill="#7c6a68"/>
<polygon points="783.5,733.4 1469.0,733.4 1470.0,722.0 1481.0,722.0 1481.8,699.8 1521.5,698.5 1522.2,697.5 1568.3,697.4 1568.3,750.5 783.5,750.5" fill="#786764"/>
<polygon points="783.5,740.0 1469.0,740.0 1470.0,728.0 1481.0,728.0 1481.8,711.6 1521.5,711.6 1522.2,706.3 1568.3,705.2 1568.3,750.5 783.5,750.5" fill="#766462"/>
<rect x="783.5" y="724.4" width="686.0" height="3.800000000000068" fill="#53401f"/>
<rect x="783.5" y="728.2" width="686.0" height="5.199999999999932" fill="#514f3e"/>
<rect x="783.5" y="733.4" width="686.0" height="3.800000000000068" fill="#4b5f5f"/>
<rect x="783.5" y="737.2" width="686.0" height="2.7999999999999545" fill="#52645f"/>
<rect x="783.5" y="740" width="686.0" height="3.3999999999999773" fill="#5f5a5f"/>
<rect x="783.5" y="743.4" width="686.0" height="7.100000000000023" fill="#736464"/>
<path d="M783.5 728.2H1469.500" stroke="#5a8fd8" stroke-width="1"/>
<path d="M783.5 733.4H1469.500" stroke="#8ab8e8" stroke-width="1"/>
<path d="M783.5 740H1469.500" stroke="#6a9a5a" stroke-width="1"/>
<polygon points="1481.8,651.6 1505.9,651.6 1507.3,650.2 1521.8,650.2 1521.8,685.3 1507.3,685.3 1505.9,687.5 1481.8,687.5" fill="#645d58"/>
<polygon points="1482.5,646.3 1505.9,645.1 1506.6,639.2 1521.5,636.4 1521.8,650.2 1507.3,650.2 1505.9,651.6 1482.0,651.6" fill="#695f4b"/>
<polygon points="1469.5,722.0 1481.0,722.0 1481.8,699.5 1568.3,697.4 1568.3,750.5 1469.5,750.5" fill="#786764"/>
<polyline points="783.5,741.5 1275.0,741.5 1276.0,742.3 1469.8,742.3 1470.2,641.4 1479.7,641.4 1480.4,587.5 1489.6,587.5 1491.7,586.5 1516.5,586.5 1519.4,585.3 1521.5,585.3 1522.2,563.4 1532.1,563.4 1534.2,556.7 1542.0,556.7 1544.6,553.5 1548.4,553.5 1549.8,554.5 1557.6,554.5 1559.7,553.5 1568.3,553.5" fill="none" stroke="#1f60c4" stroke-width="0.85" stroke-opacity="0.9" stroke-linejoin="round"/>
<polyline points="783.5,742.0 1470.0,742.0 1470.4,670.5 1480.2,670.5 1480.8,592.4 1521.5,592.4 1522.2,569.5 1547.7,569.5 1549.8,570.5 1557.6,570.5 1560.2,573.6 1568.3,573.6" fill="none" stroke="#c8703c" stroke-width="0.85" stroke-opacity="0.9" stroke-linejoin="round"/>
<polyline points="783.5,743.4 1249.4,743.4 1250.0,744.7 1307.6,744.7 1308.0,743.4 1312.0,743.4 1312.5,744.7 1444.0,744.7 1444.5,743.4 1459.0,743.4 1459.5,738.0 1469.0,738.0 1469.5,717.2 1479.0,717.2 1480.4,636.4 1516.5,636.4 1518.6,635.2 1521.0,635.2 1521.9,585.3 1532.1,585.3 1533.8,587.5 1547.7,587.5 1549.4,594.3 1568.3,594.3" fill="none" stroke="#d4ebb8" stroke-width="1.10" stroke-opacity="0.9" stroke-linejoin="round"/>
<polyline points="1275.8,742.5 1277.0,738.0 1458.9,738.0 1459.5,736.0 1469.0,736.0 1469.5,716.0 1481.0,716.0 1482.5,646.3 1491.7,645.6 1505.9,645.1 1506.6,639.2 1512.3,638.5 1517.2,637.5 1521.5,636.4 1522.9,609.4 1542.0,609.4 1544.2,608.4 1547.7,608.7 1549.1,611.3 1557.6,611.3 1559.7,609.4 1568.3,609.4" fill="none" stroke="#b8503c" stroke-width="0.85" stroke-opacity="0.9" stroke-linejoin="round"/>
<polyline points="783.5,741.0 1469.5,741.0 1470.0,718.0 1481.0,718.0 1481.8,651.6 1505.9,651.6 1507.3,650.2 1521.5,650.2 1522.3,626.4 1532.1,626.2 1534.2,625.4 1542.0,625.0 1544.9,623.6 1547.7,623.9 1549.8,624.7 1568.3,624.6" fill="none" stroke="#9684c0" stroke-width="0.85" stroke-opacity="0.9" stroke-linejoin="round"/>
<polyline points="783.5,737.2 1276.5,737.2 1277.0,739.0 1443.0,739.0 1444.5,736.0 1469.5,736.0 1470.0,719.0 1481.0,719.0 1481.8,687.5 1490.3,687.5 1491.7,686.0 1496.0,686.0 1497.4,687.5 1505.9,687.5 1507.3,685.3 1521.5,685.3 1522.2,655.3 1532.1,655.3 1533.5,654.2 1542.0,654.2 1544.2,653.2 1557.6,653.2 1559.7,654.5 1568.3,654.5" fill="none" stroke="#b868b4" stroke-width="0.85" stroke-opacity="0.9" stroke-linejoin="round"/>
<polyline points="783.5,740.0 1469.5,740.0 1470.0,720.0 1481.0,720.0 1481.8,689.6 1521.5,689.6 1522.2,678.5 1532.1,678.3 1533.8,676.4 1557.6,676.4 1559.7,677.6 1568.3,677.6" fill="none" stroke="#c490c4" stroke-width="0.85" stroke-opacity="0.9" stroke-linejoin="round"/>
<polyline points="783.5,724.4 1232.0,724.4 1233.0,725.3 1244.7,725.3 1245.5,724.4 1271.0,724.4 1272.0,725.3 1303.0,725.3 1304.0,724.4 1354.0,724.4 1355.0,725.3 1391.0,725.3 1392.0,724.4 1469.0,724.4 1470.5,711.3 1479.0,711.3 1481.8,692.4 1521.5,692.4 1522.2,686.0 1542.0,685.6 1544.2,684.6 1568.3,684.6" fill="none" stroke="#e6c229" stroke-width="1.02" stroke-opacity="0.9" stroke-linejoin="round"/>
<polyline points="783.5,728.2 1254.0,728.2 1255.5,729.5 1469.0,729.5 1470.0,721.0 1481.0,721.0 1481.8,699.5 1490.0,699.5 1492.4,698.1 1496.0,698.1 1497.4,699.5 1505.9,699.5 1507.3,698.1 1521.5,698.1 1522.2,694.6 1532.1,694.3 1534.2,692.4 1542.0,692.1 1544.9,691.0 1548.4,691.3 1549.8,692.4 1568.3,692.4" fill="none" stroke="#6a80b0" stroke-width="0.85" stroke-opacity="0.9" stroke-linejoin="round"/>
<polyline points="783.5,733.4 1469.0,733.4 1470.0,722.0 1481.0,722.0 1481.8,699.8 1521.5,698.5 1522.2,697.5 1568.3,697.4" fill="none" stroke="#7a8cb0" stroke-width="0.85" stroke-opacity="0.9" stroke-linejoin="round"/>
<polyline points="783.5,740.0 1469.0,740.0 1470.0,728.0 1481.0,728.0 1481.8,711.6 1521.5,711.6 1522.2,706.3 1568.3,705.2" fill="none" stroke="#74885e" stroke-width="0.85" stroke-opacity="0.9" stroke-linejoin="round"/>
<path d="M783.5 741.600H1275.500l1 0.800H1469" stroke="#2f55b8" stroke-width="1" fill="none"/>
<path d="M1275.800 742.500L1277.500 738.200H1459" stroke="#c4252e" stroke-width="1.400" fill="none"/>
<polyline points="1481.8,722.0 1521.5,722.0 1522.2,719.5 1532.0,719.5 1534.0,717.4 1557.0,717.4 1560.0,716.2 1568.3,716.2" fill="none" stroke="#7f7890" stroke-width="0.8"/>
<polyline points="1481.8,727.0 1521.5,727.0 1522.2,726.0 1568.3,725.7" fill="none" stroke="#85786e" stroke-width="0.8"/>
<polyline points="1481.8,731.0 1568.3,729.0" fill="none" stroke="#80706c" stroke-width="0.8"/>
</svg>
</div>
</body></html>
